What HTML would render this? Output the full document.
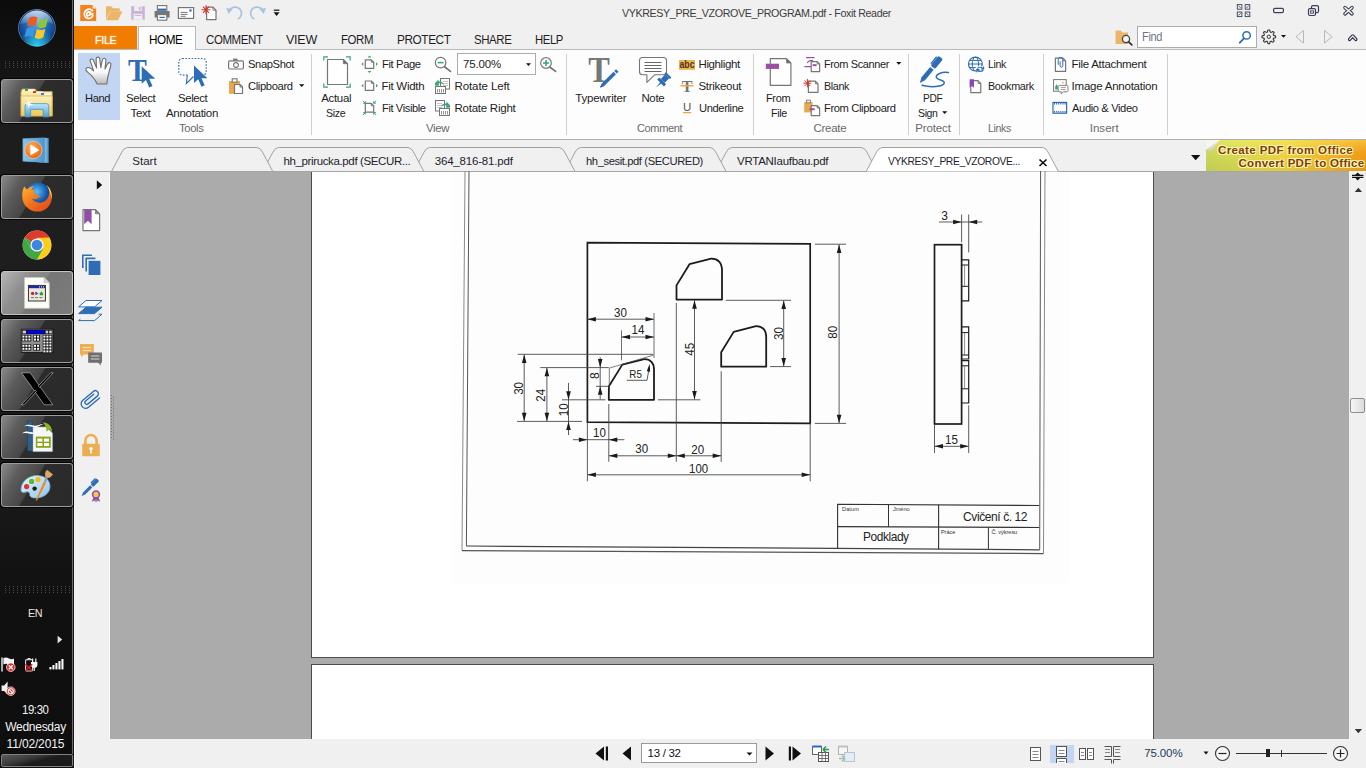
<!DOCTYPE html>
<html lang="en"><head><meta charset="utf-8"><title>VYKRESY_PRE_VZOROVE_PROGRAM.pdf - Foxit Reader</title>
<style>
html,body{margin:0;padding:0;}
body{width:1366px;height:768px;overflow:hidden;background:#f0f0f0;position:relative;font-family:"Liberation Sans",sans-serif;}
.b{position:absolute;display:block;}
.t{position:absolute;white-space:pre;font-family:"Liberation Sans",sans-serif;}
</style></head>
<body>
<div class="b" style="left:74px;top:0px;width:1292px;height:768px;background:#f0f0f0;"></div>
<div class="b" style="left:74px;top:49px;width:1292px;height:91px;background:#fdfdfd;border-top:1px solid #b9b9b9;border-bottom:1px solid #b0b0b0;box-sizing:border-box;"></div>
<div class="b" style="left:74px;top:26px;width:63px;height:23px;background:#f07c00;"></div>
<span class="t" style="left:94.80px;top:33.00px;font-size:11.5px;line-height:15px;letter-spacing:-0.403px;color:#ffffff;transform:scaleX(0.9481);transform-origin:0 0;text-shadow:0 0 2px #ffd9a8;">FILE</span>
<div class="b" style="left:138px;top:26px;width:58px;height:24px;background:#fdfdfd;border:1px solid #b9b9b9;border-bottom:none;box-sizing:border-box;"></div>
<span class="t" style="left:149.00px;top:32.00px;font-size:12.5px;line-height:16px;letter-spacing:-0.438px;color:#000;transform:scaleX(0.9370);transform-origin:0 0;">HOME</span>
<span class="t" style="left:206.00px;top:32.00px;font-size:12.5px;line-height:16px;letter-spacing:-0.438px;color:#1e1e1e;transform:scaleX(0.9185);transform-origin:0 0;">COMMENT</span>
<span class="t" style="left:286.00px;top:32.00px;font-size:12.5px;line-height:16px;letter-spacing:-0.237px;color:#1e1e1e;">VIEW</span>
<span class="t" style="left:341.00px;top:32.00px;font-size:12.5px;line-height:16px;letter-spacing:-0.438px;color:#1e1e1e;transform:scaleX(0.9130);transform-origin:0 0;">FORM</span>
<span class="t" style="left:396.50px;top:32.00px;font-size:12.5px;line-height:16px;letter-spacing:-0.438px;color:#1e1e1e;transform:scaleX(0.9442);transform-origin:0 0;">PROTECT</span>
<span class="t" style="left:473.50px;top:32.00px;font-size:12.5px;line-height:16px;letter-spacing:-0.438px;color:#1e1e1e;transform:scaleX(0.9173);transform-origin:0 0;">SHARE</span>
<span class="t" style="left:534.50px;top:32.00px;font-size:12.5px;line-height:16px;letter-spacing:-0.438px;color:#1e1e1e;transform:scaleX(0.9060);transform-origin:0 0;">HELP</span>
<span class="t" style="left:622.00px;top:6.00px;font-size:11.5px;line-height:15px;letter-spacing:-0.403px;color:#3c3c3c;transform:scaleX(0.9291);transform-origin:0 0;">VYKRESY_PRE_VZOROVE_PROGRAM.pdf - Foxit Reader</span>
<div class="b" style="left:1137px;top:26px;width:120px;height:22px;background:#fff;border:1px solid #ababab;box-sizing:border-box;"></div>
<span class="t" style="left:1141.50px;top:29.00px;font-size:12px;line-height:16px;letter-spacing:-0.420px;color:#6e7686;transform:scaleX(0.9232);transform-origin:0 0;">Find</span>
<div class="b" style="left:78px;top:53px;width:42px;height:67px;background:#c2d5f2;"></div>
<svg class="b" style="left:0px;top:0px;" width="1366" height="140" viewBox="0 0 1366 140"><defs><linearGradient id="hg" x1="0" x2="0" y1="0" y2="1"><stop offset="0" stop-color="#ffffff"/><stop offset="0.55" stop-color="#fbfbfb"/><stop offset="1" stop-color="#b9b9b9"/></linearGradient></defs><path d="M97.2,84 C95.5,80.5 92,75.5 88.2,72.6 C85.6,70.6 85.2,68.6 86.8,67.8 C88.6,66.9 91.2,68.2 93.6,71 C92.6,67.5 91,63.5 90.2,61 C89.6,59 92.4,58.2 93.4,60.2 C94.4,62.4 95.6,65.6 96.6,68 C96.4,65 96,60.8 96.2,58.6 C96.4,56.6 99.4,56.6 99.7,58.6 C100,61 100.4,65 100.9,67.6 C101.3,65 101.9,61.2 102.6,59.4 C103.3,57.6 106,58 105.9,60 C105.8,62.6 105.2,66.4 105,69 C105.8,67.2 106.9,64.8 107.9,63.4 C109,61.9 111.3,62.8 110.9,64.8 C110,69 108.6,73.2 107.9,76.6 C107.4,79.4 107.2,81.6 106.8,84 Z" fill="url(#hg)" stroke="#6e6e6e" stroke-width="1.1" stroke-linejoin="round"/><text x="137.4" y="81.2" font-family="Liberation Serif,serif" font-size="32.4" font-weight="bold" fill="#2e6db4" text-anchor="middle" textLength="18.8" lengthAdjust="spacingAndGlyphs">T</text><path d="M141.70,66.20 L141.70,83.86 L145.95,79.93 L149.22,87.56 L152.49,86.04 L149.22,78.84 L155.22,78.84 Z" fill="#2e6db4"/><path d="M182.3,58.5 h20.4 a3.5,3.5 0 0 1 3.5,3.5 v9.6 a3.5,3.5 0 0 1 -3.5,3.5 h-8 M187.5,75.1 h-5.2 a3.5,3.5 0 0 1 -3.5,-3.5 v-9.6 a3.5,3.5 0 0 1 3.5,-3.5" fill="none" stroke="#2e6db4" stroke-width="1.2" stroke-dasharray="1.6 1.5"/><path d="M187.3,75.3 L186.4,83.5 L193.5,76.5" fill="none" stroke="#2e6db4" stroke-width="1.1"/><path d="M194.00,65.60 L194.00,83.10 L198.21,79.21 L201.45,86.77 L204.69,85.26 L201.45,78.13 L207.39,78.13 Z" fill="#2e6db4"/><rect x="228.6" y="60.8" width="14.8" height="8.2" rx="1.2" fill="#fff" stroke="#767676" stroke-width="1.2"/><rect x="233" y="58.6" width="4.5" height="2" fill="#767676"/><circle cx="236" cy="65" r="2.4" fill="none" stroke="#767676" stroke-width="1.1"/><rect x="229" y="81" width="11" height="12.8" fill="#e9a94d"/><rect x="232.2" y="78.8" width="4.8" height="3.4" fill="#fff" stroke="#767676" stroke-width="1.1"/><path d="M234.5,84.5 h5.5 l2.5,2.5 v6.5 h-8 z" fill="#fff" stroke="#767676" stroke-width="1.2" stroke-linejoin="round"/><path d="M240.0,84.5 v2.5 h2.5" fill="none" stroke="#767676" stroke-width="0.96"/><path d="M299,84.3 h5.4 l-2.7,2.8 z" fill="#111"/><path d="M311.5,54 V135" stroke="#d0d0d0" stroke-width="1"/><path d="M566.5,54 V135" stroke="#d0d0d0" stroke-width="1"/><path d="M753.5,54 V135" stroke="#d0d0d0" stroke-width="1"/><path d="M908.5,54 V135" stroke="#d0d0d0" stroke-width="1"/><path d="M959.5,54 V135" stroke="#d0d0d0" stroke-width="1"/><path d="M1043.5,54 V135" stroke="#d0d0d0" stroke-width="1"/><path d="M1167.5,54 V135" stroke="#d0d0d0" stroke-width="1"/><path d="M323.8,60.5 v-3.6 h4.2 M346,56.9 h4.2 v3.6 M350.2,83.5 v3.7 h-4.2 M328,87.2 h-4.2 v-3.7" fill="none" stroke="#3aa373" stroke-width="1.2"/><path d="M327.5,59.5 h15.8 l4.2,4.2 v20.8 h-20 z" fill="#fff" stroke="#767676" stroke-width="1.2" stroke-linejoin="round"/><path d="M343.3,59.5 v4.2 h4.2 z" fill="#6f6f6f" stroke="#767676" stroke-width="0.72"/><path d="M365.3,59.8 h6.0 l2.4,2.4 v6.199999999999999 h-8.4 z" fill="#fff" stroke="#767676" stroke-width="1.2" stroke-linejoin="round"/><path d="M371.3,59.8 v2.4 h2.4" fill="none" stroke="#767676" stroke-width="0.96"/><path d="M361.40000000000003,64.1 l1.9,-1.9 v3.8 z" fill="#3aa373"/><path d="M377.9,64.1 l-1.9,-1.9 v3.8 z" fill="#3aa373"/><path d="M369.5,55.5 l1.9,1.9 h-3.8 z" fill="#3aa373"/><path d="M369.5,72.9 l1.9,-1.9 h-3.8 z" fill="#3aa373"/><path d="M365.3,81 h6.0 l2.4,2.4 v7.0 h-8.4 z" fill="#fff" stroke="#767676" stroke-width="1.2" stroke-linejoin="round"/><path d="M371.3,81 v2.4 h2.4" fill="none" stroke="#767676" stroke-width="0.96"/><path d="M361.40000000000003,85.7 l1.9,-1.9 v3.8 z" fill="#3aa373"/><path d="M377.9,85.7 l-1.9,-1.9 v3.8 z" fill="#3aa373"/><path d="M365.3,103.4 h6.0 l2.4,2.4 v6.4 h-8.4 z" fill="#fff" stroke="#767676" stroke-width="1.2" stroke-linejoin="round"/><path d="M371.3,103.4 v2.4 h2.4" fill="none" stroke="#767676" stroke-width="0.96"/><path d="M362.8,100.8 l2.3,2.3 M365.3,101.2 v2.1 h-2.1" stroke="#3aa373" stroke-width="1" fill="none"/><path d="M376.2,100.8 l-2.3,2.3 M373.7,101.2 v2.1 h2.1" stroke="#3aa373" stroke-width="1" fill="none"/><path d="M362.8,115 l2.3,-2.3 M365.3,114.6 v-2.1 h-2.1" stroke="#3aa373" stroke-width="1" fill="none"/><path d="M376.2,115 l-2.3,-2.3 M373.7,114.6 v-2.1 h2.1" stroke="#3aa373" stroke-width="1" fill="none"/><circle cx="440.6" cy="62.6" r="5.3" fill="#fff" stroke="#767676" stroke-width="1.2"/><path d="M444.6,66.8 L450.4,71.4" stroke="#767676" stroke-width="1.8" stroke-linecap="round"/><path d="M437.6,62.6 h6" stroke="#3aa373" stroke-width="1.5"/><rect x="457.5" y="53.5" width="78" height="21" fill="#fff" stroke="#ababab"/><path d="M526,63.2 h5 l-2.5,2.7 z" fill="#111"/><circle cx="546" cy="63" r="5.3" fill="#fff" stroke="#767676" stroke-width="1.2"/><path d="M550,67.2 L555.6,71.4" stroke="#767676" stroke-width="1.8" stroke-linecap="round"/><path d="M543,63 h6 M546,60 v6" stroke="#3aa373" stroke-width="1.5"/><rect x="440.5" y="78.5" width="9" height="10.5" fill="#fff" stroke="#767676" stroke-width="1"/><path d="M443,81.5 h5 M443,83.5 h5 M443,85.5 h5" stroke="#aaa" stroke-width="0.7"/><rect x="435.5" y="86.5" width="10" height="7" fill="#fff" stroke="#767676" stroke-width="1"/><path d="M437.5,89 v3.5 M439.5,89 v3.5 M441.5,89 v3.5 M443.5,89 v3.5" stroke="#767676" stroke-width="0.8"/><path d="M435,83.2 l3.6,-3.6 v2 c3,-0.3 5,0.8 5.4,3.6 c-1.2,-1.6 -3,-2 -5.4,-1.8 v2.6 z" fill="#3aa373"/><rect x="435" y="83" width="3.4" height="2.6" fill="#3aa373"/><rect x="435.5" y="100.5" width="9" height="10.5" fill="#fff" stroke="#767676" stroke-width="1"/><path d="M437,103.5 h5 M437,105.5 h5 M437,107.5 h5" stroke="#aaa" stroke-width="0.7"/><rect x="439.5" y="108.5" width="10" height="7" fill="#fff" stroke="#767676" stroke-width="1"/><path d="M441.5,111 v3.5 M443.5,111 v3.5 M445.5,111 v3.5 M447.5,111 v3.5" stroke="#767676" stroke-width="0.8"/><path d="M450,105.2 l-3.6,-3.6 v2 c-3,-0.3 -5,0.8 -5.4,3.6 c1.2,-1.6 3,-2 5.4,-1.8 v2.6 z" fill="#3aa373"/><rect x="446.6" y="105" width="3.4" height="2.6" fill="#3aa373"/><text x="599" y="82" font-family="Liberation Serif,serif" font-size="36.4" font-weight="bold" fill="#767676" text-anchor="middle" textLength="21.6" lengthAdjust="spacingAndGlyphs">T</text><g transform="translate(600.2,87.6) rotate(-45)"><path d="M0,0 l3.6,-1.7 h17 v3.4 h-17 z" fill="#2e6db4"/><rect x="21.6" y="-1.7" width="2.6" height="3.4" fill="#2e6db4"/><path d="M0,0 l2,-0.9 v1.8 z" fill="#1c3f6e"/></g><path d="M642.5,57.5 h21 a3,3 0 0 1 3,3 v11.2 a3,3 0 0 1 -3,3 h-8.6 l-8,7.6 v-7.6 h-4.4 a3,3 0 0 1 -3,-3 v-11.2 a3,3 0 0 1 3,-3 z" fill="#fff" stroke="#767676" stroke-width="1.1" stroke-linejoin="round"/><path d="M644.5,62.5 h17 M644.5,65.5 h17 M644.5,68.5 h17 M644.5,71.5 h17" stroke="#555" stroke-width="0.9"/><g transform="translate(656,87.6) rotate(-45)"><path d="M0,0 L7,-0.9 V0.9 Z" fill="#2e6db4"/><rect x="6.5" y="-4.8" width="3" height="9.6" fill="#2e6db4"/><rect x="9.5" y="-2.8" width="6.5" height="5.6" fill="#2e6db4"/><rect x="16" y="-3.8" width="2" height="7.6" fill="#2e6db4"/></g><rect x="679" y="60" width="16" height="9.8" fill="#f0b24f"/><text x="687" y="68" font-family="Liberation Sans,sans-serif" font-weight="bold" font-size="10.5" fill="#4a3a20" text-anchor="middle" textLength="15" lengthAdjust="spacingAndGlyphs">abc</text><text x="687" y="91.6" font-family="Liberation Serif,serif" font-weight="bold" font-size="16" fill="#757575" text-anchor="middle">T</text><path d="M680.6,85.7 h12.8" stroke="#eda53c" stroke-width="1.5"/><text x="687.1" y="110.6" font-family="Liberation Sans,sans-serif" font-size="11.5" fill="#555" text-anchor="middle">U</text><path d="M683,112.6 h8.2" stroke="#eda53c" stroke-width="1.3"/><path d="M770.3,58.6 h16.200000000000003 l4.4,4.4 v22.4 h-20.6 z" fill="#fff" stroke="#767676" stroke-width="1.2" stroke-linejoin="round"/><path d="M786.5,58.6 v4.4 h4.4 z" fill="#6f6f6f" stroke="#767676" stroke-width="0.72"/><rect x="765.8" y="63.7" width="13.2" height="5.2" fill="#9b4fa5"/><path d="M811.2,61.6 h6.0 l2.4,2.4 v7.6 h-8.4 z" fill="#fff" stroke="#767676" stroke-width="1.2" stroke-linejoin="round"/><path d="M817.2,61.6 v2.4 h2.4" fill="none" stroke="#767676" stroke-width="0.96"/><path d="M806,57.6 h8.6" stroke="#9b4fa5" stroke-width="1.2"/><path d="M804.4,66.6 h6.8 M807,62.8 l3,-2.2 h3" stroke="#9b4fa5" stroke-width="1.1" fill="none"/><rect x="812.6" y="64.2" width="4" height="2" fill="#9b4fa5"/><path d="M896.2,62 h5.2 l-2.6,2.7 z" fill="#111"/><path d="M808.4,81.2 h7.0 l2.6,2.6 v8.6 h-9.6 z" fill="#fff" stroke="#767676" stroke-width="1.2" stroke-linejoin="round"/><path d="M815.4,81.2 v2.6 h2.6" fill="none" stroke="#767676" stroke-width="0.96"/><path d="M807.4,79 v8.4 M803.4,83.2 h8 M804.6,80.4 l5.6,5.6 M810.2,80.4 l-5.6,5.6" stroke="#d0372a" stroke-width="1" /><rect x="804.2" y="102" width="8.4" height="10.4" fill="#e9a94d"/><rect x="806.6" y="100.2" width="3.8" height="2.6" fill="#fff" stroke="#767676" stroke-width="0.9"/><path d="M811.2,105.6 h6.0 l2.4,2.4 v7.6 h-8.4 z" fill="#fff" stroke="#767676" stroke-width="1.2" stroke-linejoin="round"/><path d="M817.2,105.6 v2.4 h2.4" fill="none" stroke="#767676" stroke-width="0.96"/><rect x="809.6" y="108.2" width="5" height="2" fill="#9b4fa5"/><g transform="translate(919.8,83) rotate(-50.5)"><path d="M0,0 L5.5,-2.3 H19 V2.3 H5.5 Z" fill="#2e6db4"/><rect x="20.4" y="-2.9" width="12.6" height="5.8" rx="1.6" fill="#2e6db4"/><rect x="22" y="-4.4" width="9" height="1.4" fill="#2e6db4"/></g><path d="M948.4,72.6 C942,71.6 935.4,74.2 936.4,77.6 C937.4,80.6 945,79.6 944.2,83.2 C943.4,87 930,87.6 922,85.2" fill="none" stroke="#2e6db4" stroke-width="1.5" stroke-linecap="round"/><path d="M942.1,111.2 h5.2 l-2.6,2.7 z" fill="#111"/><circle cx="975.4" cy="64" r="6.9" fill="#fff" stroke="#2e6db4" stroke-width="1.2"/><ellipse cx="975.4" cy="64" rx="3.1" ry="6.9" fill="none" stroke="#2e6db4" stroke-width="1"/><path d="M968.5,64 h13.8 M969.6,60.4 h11.6 M969.6,67.6 h11.6" stroke="#2e6db4" stroke-width="1"/><rect x="975.8" y="66.4" width="8.6" height="6" fill="#fff"/><path d="M977,68.6 c2,-1.8 4.6,-1.8 6.2,0 M983.6,66.4 v2.6 h-2.6 M983.4,70 c-2,1.8 -4.6,1.8 -6.2,0 M976.8,72.2 v-2.6 h2.6" fill="none" stroke="#2e6db4" stroke-width="1.2"/><path d="M970.8,80.6 h7.2 l2.8,2.8 v9.2 h-10 z" fill="#fff" stroke="#767676" stroke-width="1.2" stroke-linejoin="round"/><path d="M978.0,80.6 v2.8 h2.8" fill="none" stroke="#767676" stroke-width="0.96"/><path d="M969.6,79.2 h4.4 v8.6 l-2.2,-1.8 l-2.2,1.8 z" fill="#8e44ad"/><path d="M1055.4,58.2 h7.6 l2.6,2.6 v10.6 h-10.2 z" fill="#fff" stroke="#767676" stroke-width="1.2" stroke-linejoin="round"/><path d="M1063.0000000000002,58.2 v2.6 h2.6" fill="none" stroke="#767676" stroke-width="0.96"/><path d="M1058.2,64.8 v-5.2 a2.3,2.3 0 0 1 4.6,0 v6.2 a1.35,1.35 0 0 1 -2.7,0 v-4.6" fill="none" stroke="#2e6db4" stroke-width="1"/><rect x="1053.6" y="79.6" width="12.6" height="11.6" fill="#fff" stroke="#767676" stroke-width="1"/><path d="M1055.2,89.6 v-3 l1.4,-2.4 l1.2,2 v3.4 z" fill="#3aa373"/><circle cx="1063" cy="82.6" r="0.9" fill="#e9a94d"/><path d="M1059.6,85.4 h7 a1.4,1.4 0 0 1 1.4,1.4 v3.6 a1.4,1.4 0 0 1 -1.4,1.4 h-3.2 l-2.2,2 v-2 h-1.6 a1.4,1.4 0 0 1 -1.4,-1.4 v-3.6 a1.4,1.4 0 0 1 1.4,-1.4 z" fill="#fff" stroke="#767676" stroke-width="0.9"/><path d="M1060.6,87.6 h5.2 M1060.6,89.6 h5.2" stroke="#767676" stroke-width="0.7"/><rect x="1053" y="102.4" width="13.6" height="10.8" fill="#fff" stroke="#2e6db4" stroke-width="1.2"/><path d="M1054,103.8 h12" stroke="#2e6db4" stroke-width="1.6" stroke-dasharray="1.1 1"/><path d="M1054,111.8 h12" stroke="#2e6db4" stroke-width="1.6" stroke-dasharray="1.1 1"/></svg>
<span class="t" style="left:85.40px;top:91.00px;font-size:11.5px;line-height:15px;letter-spacing:-0.403px;color:#1e1e1e;transform:scaleX(0.9697);transform-origin:0 0;">Hand</span>
<span class="t" style="left:125.50px;top:91.00px;font-size:11.5px;line-height:15px;letter-spacing:-0.403px;color:#1e1e1e;transform:scaleX(0.9916);transform-origin:0 0;">Select</span>
<span class="t" style="left:130.50px;top:106.00px;font-size:11.5px;line-height:15px;letter-spacing:-0.323px;color:#1e1e1e;">Text</span>
<span class="t" style="left:177.50px;top:91.00px;font-size:11.5px;line-height:15px;letter-spacing:-0.403px;color:#1e1e1e;transform:scaleX(0.9916);transform-origin:0 0;">Select</span>
<span class="t" style="left:165.90px;top:106.00px;font-size:11.5px;line-height:15px;letter-spacing:-0.279px;color:#1e1e1e;">Annotation</span>
<span class="t" style="left:247.60px;top:57.00px;font-size:11.5px;line-height:15px;letter-spacing:-0.403px;color:#1e1e1e;transform:scaleX(0.9747);transform-origin:0 0;">SnapShot</span>
<span class="t" style="left:247.60px;top:79.00px;font-size:11.5px;line-height:15px;letter-spacing:-0.403px;color:#1e1e1e;transform:scaleX(0.9802);transform-origin:0 0;">Clipboard</span>
<span class="t" style="left:321.20px;top:91.00px;font-size:11.5px;line-height:15px;letter-spacing:-0.327px;color:#1e1e1e;">Actual</span>
<span class="t" style="left:326.30px;top:106.00px;font-size:11.5px;line-height:15px;letter-spacing:-0.403px;color:#1e1e1e;transform:scaleX(0.9248);transform-origin:0 0;">Size</span>
<span class="t" style="left:381.50px;top:57.00px;font-size:11.5px;line-height:15px;letter-spacing:-0.403px;color:#1e1e1e;transform:scaleX(0.9771);transform-origin:0 0;">Fit Page</span>
<span class="t" style="left:381.50px;top:79.00px;font-size:11.5px;line-height:15px;letter-spacing:-0.285px;color:#1e1e1e;">Fit Width</span>
<span class="t" style="left:381.50px;top:101.00px;font-size:11.5px;line-height:15px;letter-spacing:-0.403px;color:#1e1e1e;transform:scaleX(0.9643);transform-origin:0 0;">Fit Visible</span>
<span class="t" style="left:462.90px;top:57.00px;font-size:11.5px;line-height:15px;letter-spacing:-0.151px;color:#1e1e1e;">75.00%</span>
<span class="t" style="left:454.50px;top:79.00px;font-size:11.5px;line-height:15px;letter-spacing:-0.096px;color:#1e1e1e;">Rotate Left</span>
<span class="t" style="left:454.50px;top:101.00px;font-size:11.5px;line-height:15px;letter-spacing:-0.244px;color:#1e1e1e;">Rotate Right</span>
<span class="t" style="left:575.20px;top:91.00px;font-size:11.5px;line-height:15px;letter-spacing:-0.174px;color:#1e1e1e;">Typewriter</span>
<span class="t" style="left:641.40px;top:91.00px;font-size:11.5px;line-height:15px;letter-spacing:-0.348px;color:#1e1e1e;">Note</span>
<span class="t" style="left:698.50px;top:57.00px;font-size:11.5px;line-height:15px;letter-spacing:-0.383px;color:#1e1e1e;">Highlight</span>
<span class="t" style="left:698.50px;top:79.00px;font-size:11.5px;line-height:15px;letter-spacing:-0.298px;color:#1e1e1e;">Strikeout</span>
<span class="t" style="left:698.50px;top:101.00px;font-size:11.5px;line-height:15px;letter-spacing:-0.403px;color:#1e1e1e;transform:scaleX(0.9714);transform-origin:0 0;">Underline</span>
<span class="t" style="left:766.20px;top:91.00px;font-size:11.5px;line-height:15px;letter-spacing:-0.403px;color:#1e1e1e;transform:scaleX(0.9595);transform-origin:0 0;">From</span>
<span class="t" style="left:770.60px;top:106.00px;font-size:11.5px;line-height:15px;letter-spacing:-0.403px;color:#1e1e1e;transform:scaleX(0.9337);transform-origin:0 0;">File</span>
<span class="t" style="left:823.80px;top:57.00px;font-size:11.5px;line-height:15px;letter-spacing:-0.403px;color:#1e1e1e;transform:scaleX(0.9555);transform-origin:0 0;">From Scanner</span>
<span class="t" style="left:823.80px;top:79.00px;font-size:11.5px;line-height:15px;letter-spacing:-0.403px;color:#1e1e1e;transform:scaleX(0.9344);transform-origin:0 0;">Blank</span>
<span class="t" style="left:823.80px;top:101.00px;font-size:11.5px;line-height:15px;letter-spacing:-0.403px;color:#1e1e1e;transform:scaleX(0.9740);transform-origin:0 0;">From Clipboard</span>
<span class="t" style="left:923.10px;top:91.00px;font-size:11.5px;line-height:15px;letter-spacing:-0.403px;color:#1e1e1e;transform:scaleX(0.8856);transform-origin:0 0;">PDF</span>
<span class="t" style="left:918.40px;top:106.00px;font-size:11.5px;line-height:15px;letter-spacing:-0.403px;color:#1e1e1e;transform:scaleX(0.9155);transform-origin:0 0;">Sign</span>
<span class="t" style="left:987.80px;top:57.00px;font-size:11.5px;line-height:15px;letter-spacing:-0.403px;color:#1e1e1e;transform:scaleX(0.9186);transform-origin:0 0;">Link</span>
<span class="t" style="left:987.80px;top:79.00px;font-size:11.5px;line-height:15px;letter-spacing:-0.403px;color:#1e1e1e;transform:scaleX(0.9413);transform-origin:0 0;">Bookmark</span>
<span class="t" style="left:1071.60px;top:57.00px;font-size:11.5px;line-height:15px;letter-spacing:-0.291px;color:#1e1e1e;">File Attachment</span>
<span class="t" style="left:1071.60px;top:79.00px;font-size:11.5px;line-height:15px;letter-spacing:-0.232px;color:#1e1e1e;">Image Annotation</span>
<span class="t" style="left:1071.60px;top:101.00px;font-size:11.5px;line-height:15px;letter-spacing:-0.403px;color:#1e1e1e;transform:scaleX(0.9726);transform-origin:0 0;">Audio &amp; Video</span>
<span class="t" style="left:179.00px;top:121.00px;font-size:11.5px;line-height:15px;letter-spacing:-0.403px;color:#6a6a6a;transform:scaleX(0.9865);transform-origin:0 0;">Tools</span>
<span class="t" style="left:426.00px;top:121.00px;font-size:11.5px;line-height:15px;letter-spacing:-0.403px;color:#6a6a6a;transform:scaleX(0.9953);transform-origin:0 0;">View</span>
<span class="t" style="left:636.70px;top:121.00px;font-size:11.5px;line-height:15px;letter-spacing:-0.403px;color:#6a6a6a;transform:scaleX(0.9590);transform-origin:0 0;">Comment</span>
<span class="t" style="left:813.60px;top:121.00px;font-size:11.5px;line-height:15px;letter-spacing:-0.303px;color:#6a6a6a;">Create</span>
<span class="t" style="left:915.20px;top:121.00px;font-size:11.5px;line-height:15px;letter-spacing:-0.133px;color:#6a6a6a;">Protect</span>
<span class="t" style="left:988.30px;top:121.00px;font-size:11.5px;line-height:15px;letter-spacing:-0.403px;color:#6a6a6a;transform:scaleX(0.9221);transform-origin:0 0;">Links</span>
<span class="t" style="left:1089.70px;top:121.00px;font-size:11.5px;line-height:15px;letter-spacing:0.040px;color:#6a6a6a;">Insert</span>
<div class="b" style="left:74px;top:140px;width:1292px;height:31px;background:#f0f0f0;"></div>
<svg class="b" style="left:0px;top:0px;" width="1366" height="180" viewBox="0 0 1366 180"><path d="M715.9,171.5 L726.30,152.0 Q728.06,148.1 731.6999999999999,147.5 L861.4000000000001,147.5 Q865.04,148.1 866.80,152.0 L877.2,171.5" stroke="#a2a2a2" stroke-width="1" fill="#f0f0f0"/><path d="M564.8,171.5 L575.20,152.0 Q576.96,148.1 580.5999999999999,147.5 L710.3,147.5 Q713.94,148.1 715.70,152.0 L726.0999999999999,171.5" stroke="#a2a2a2" stroke-width="1" fill="#f0f0f0"/><path d="M413.7,171.5 L424.10,152.0 Q425.86,148.1 429.5,147.5 L559.2,147.5 Q562.84,148.1 564.60,152.0 L575.0,171.5" stroke="#a2a2a2" stroke-width="1" fill="#f0f0f0"/><path d="M262.6,171.5 L273.00,152.0 Q274.76,148.1 278.40000000000003,147.5 L408.1,147.5 Q411.74,148.1 413.50,152.0 L423.90000000000003,171.5" stroke="#a2a2a2" stroke-width="1" fill="#f0f0f0"/><path d="M111.5,171.5 L121.90,152.0 Q123.66,148.1 127.3,147.5 L257.0,147.5 Q260.64,148.1 262.40,152.0 L272.8,171.5" stroke="#a2a2a2" stroke-width="1" fill="#f0f0f0"/><path d="M74,171.5 H1366" stroke="#a6a6a6" stroke-width="1" fill="none"/><path d="M866.2,171.5 L876.60,152.0 Q878.36,148.1 882,147.5 L1042.6,147.5 Q1046.24,148.1 1048.00,152.0 L1058.4,171.5" stroke="#a2a2a2" stroke-width="1" fill="#ffffff"/><path d="M867.5,171.5 H1057" stroke="#c8c8c8" stroke-width="1" fill="none"/><path d="M1039.5,159.500 L1046.5,166 M1046.5,159.500 L1039.5,166" stroke="#111" stroke-width="1.700" fill="none"/><path d="M1191,155 h9.400 l-4.700,5.200 z" fill="#111"/></svg>
<span class="t" style="left:132.30px;top:154.00px;font-size:11.5px;line-height:15px;letter-spacing:0.003px;color:#1e1e2e;">Start</span>
<span class="t" style="left:283.50px;top:154.00px;font-size:11.5px;line-height:15px;letter-spacing:-0.370px;color:#1e1e2e;">hh_prirucka.pdf (SECUR...</span>
<span class="t" style="left:434.70px;top:154.00px;font-size:11.5px;line-height:15px;letter-spacing:-0.177px;color:#1e1e2e;">364_816-81.pdf</span>
<span class="t" style="left:585.50px;top:154.00px;font-size:11.5px;line-height:15px;letter-spacing:-0.403px;color:#1e1e2e;transform:scaleX(0.9722);transform-origin:0 0;">hh_sesit.pdf (SECURED)</span>
<span class="t" style="left:737.00px;top:154.00px;font-size:11.5px;line-height:15px;letter-spacing:-0.267px;color:#1e1e2e;">VRTANIaufbau.pdf</span>
<span class="t" style="left:887.50px;top:154.00px;font-size:11.5px;line-height:15px;letter-spacing:-0.403px;color:#1e1e2e;transform:scaleX(0.8935);transform-origin:0 0;">VYKRESY_PRE_VZOROVE...</span>
<div class="b" style="left:1206px;top:140px;width:160px;height:31px;background:linear-gradient(180deg,rgba(255,255,120,0.35) 0%,rgba(255,255,120,0) 45%,rgba(120,120,40,0.10) 100%),linear-gradient(90deg,#c9d65a 0%,#dcda50 25%,#edd240 50%,#f1b52c 76%,#f09a18 100%);"></div>
<svg class="b" style="left:1206px;top:140px;" width="16" height="13" viewBox="0 0 16 13"><defs><linearGradient id="curl" x1="0.2" y1="0" x2="0.8" y2="1"><stop offset="0" stop-color="#ffffff"/><stop offset="1" stop-color="#b9b9a4"/></linearGradient></defs><path d="M0,0 H14.600 L0,9.600 Z" fill="#f6f6f0"/><path d="M14.600,0 L0.400,9.400 C3,10.400 5,11.200 6,12 C7.600,7.600 10.400,3 14.600,0 Z" fill="url(#curl)"/></svg>
<span class="t" style="left:1218.00px;top:143.00px;font-size:11.5px;line-height:15px;letter-spacing:0.385px;color:#7a3f08;font-weight:bold;text-shadow:0 0 1px #fff6c0,1px 1px 0 #fff3b0,-1px -1px 0 #fff3b0,1px -1px 0 #fff3b0,-1px 1px 0 #fff3b0;">Create PDF from Office</span>
<span class="t" style="left:1238.50px;top:156.00px;font-size:11.5px;line-height:15px;letter-spacing:0.310px;color:#7a3f08;font-weight:bold;text-shadow:0 0 1px #fff6c0,1px 1px 0 #fff3b0,-1px -1px 0 #fff3b0,1px -1px 0 #fff3b0,-1px 1px 0 #fff3b0;">Convert PDF to Office</span>
<div class="b" style="left:110px;top:172px;width:1239px;height:567px;background:#ababab;"></div>
<div class="b" style="left:74px;top:172px;width:36px;height:567px;background:#f0f0f0;border-right:1px solid #fafafa;box-sizing:border-box;"></div>
<div class="b" style="left:311px;top:172px;width:843px;height:486px;background:#fff;border:1px solid #4d4d4d;border-top:none;box-sizing:border-box;"></div>
<div class="b" style="left:452px;top:172px;width:617px;height:411px;background:#fdfdfd;"></div>
<div class="b" style="left:311px;top:664px;width:843px;height:80px;background:#fff;border:1px solid #4d4d4d;box-sizing:border-box;"></div>
<div class="b" style="left:1349px;top:171px;width:17px;height:568px;background:#f0f0f0;"></div>
<svg class="b" style="left:1349px;top:171px;" width="17" height="569" viewBox="0 0 17 569"><defs><linearGradient id="thg" x1="0" x2="1" y1="0" y2="0"><stop offset="0" stop-color="#f6f6f6"/><stop offset="0.5" stop-color="#e9e9e9"/><stop offset="1" stop-color="#d9d9d9"/></linearGradient></defs><path d="M3,4.400 H14.400 M3,6.400 H14.400" stroke="#111" stroke-width="1.100"/><path d="M8.700,1.400 l2.600,2.600 h-5.200 z M8.700,9.400 l2.600,-2.600 h-5.200 z" fill="#111"/><path d="M5.800,21 l3.600,-4.200 l3.600,4.200 z" fill="#333"/><path d="M5.800,558 l3.600,4.200 l3.600,-4.200 z" fill="#333"/><rect x="1.5" y="227.5" width="14" height="14" rx="1.5" fill="url(#thg)" stroke="#8f8f8f"/></svg>
<svg class="b" style="left:111px;top:395px;" width="4" height="45" viewBox="0 0 4 45"><rect x="0" y="0" width="1" height="1" fill="#707070"/><rect x="2" y="1.5" width="1" height="1" fill="#707070"/><rect x="0" y="3" width="1" height="1" fill="#707070"/><rect x="2" y="4.5" width="1" height="1" fill="#707070"/><rect x="0" y="6" width="1" height="1" fill="#707070"/><rect x="2" y="7.5" width="1" height="1" fill="#707070"/><rect x="0" y="9" width="1" height="1" fill="#707070"/><rect x="2" y="10.5" width="1" height="1" fill="#707070"/><rect x="0" y="12" width="1" height="1" fill="#707070"/><rect x="2" y="13.5" width="1" height="1" fill="#707070"/><rect x="0" y="15" width="1" height="1" fill="#707070"/><rect x="2" y="16.5" width="1" height="1" fill="#707070"/><rect x="0" y="18" width="1" height="1" fill="#707070"/><rect x="2" y="19.5" width="1" height="1" fill="#707070"/><rect x="0" y="21" width="1" height="1" fill="#707070"/><rect x="2" y="22.5" width="1" height="1" fill="#707070"/><rect x="0" y="24" width="1" height="1" fill="#707070"/><rect x="2" y="25.5" width="1" height="1" fill="#707070"/><rect x="0" y="27" width="1" height="1" fill="#707070"/><rect x="2" y="28.5" width="1" height="1" fill="#707070"/><rect x="0" y="30" width="1" height="1" fill="#707070"/><rect x="2" y="31.5" width="1" height="1" fill="#707070"/><rect x="0" y="33" width="1" height="1" fill="#707070"/><rect x="2" y="34.5" width="1" height="1" fill="#707070"/><rect x="0" y="36" width="1" height="1" fill="#707070"/><rect x="2" y="37.5" width="1" height="1" fill="#707070"/><rect x="0" y="39" width="1" height="1" fill="#707070"/><rect x="2" y="40.5" width="1" height="1" fill="#707070"/><rect x="0" y="42" width="1" height="1" fill="#707070"/><rect x="2" y="43.5" width="1" height="1" fill="#707070"/></svg>
<svg class="b" style="left:0px;top:0px;" width="1366" height="768" viewBox="0 0 1366 768"><path d="M465,171 L462,550.6" stroke="#8a8a8a" stroke-width="1" fill="none"/><path d="M469,171 L466.4,546" stroke="#555" stroke-width="1" fill="none"/><path d="M462,550.6 L1043.5,553.6" stroke="#555" stroke-width="1.2" fill="none"/><path d="M466.4,546 L1039.7,549.8" stroke="#444" stroke-width="1.2" fill="none"/><path d="M1045,171 L1043.5,553.6" stroke="#8a8a8a" stroke-width="1" fill="none"/><path d="M1040.6,171 L1039.7,549.8" stroke="#555" stroke-width="1" fill="none"/><path d="M587.4,242.6 L810.2,243.9 L810.2,423.3 L587.4,422.2 Z" fill="none" stroke="#1c1c1c" stroke-width="1.7"/><path d="M676.5,299.6 L722,299.6 L722,270.5 C722,262.5 718,258.6 711.2,258.7 L689.5,264.2 L676.5,285.4 Z" fill="none" stroke="#1c1c1c" stroke-width="1.8" stroke-linejoin="round"/><path d="M721.2,366.7 L766.2,366.7 L766.2,337.5 C766.2,330 762.5,326 756,326.1 L733.7,331.9 L721.2,352.3 Z" fill="none" stroke="#1c1c1c" stroke-width="1.8" stroke-linejoin="round"/><path d="M608.8,399.8 L654,399.8 L654,369.5 C654,363 650.5,359 644.3,359.1 L622.3,364.6 L608.9,386.3 Z" fill="none" stroke="#1c1c1c" stroke-width="1.8" stroke-linejoin="round"/><path d="M609.3,368.1 L653.6,355.1" stroke="#4a4a4a" stroke-width="0.7" fill="none"/><path d="M609.3,368.1 L609.3,386" stroke="#4a4a4a" stroke-width="0.7" fill="none"/><path d="M587.4,319.2 L654,319.2" stroke="#4a4a4a" stroke-width="0.9" fill="none"/><path d="M587.40,319.20 L595.90,316.90 L595.90,321.50 Z" fill="#1a1a1a"/><path d="M654.00,319.20 L645.50,321.50 L645.50,316.90 Z" fill="#1a1a1a"/><path d="M654,313 L654,358" stroke="#4a4a4a" stroke-width="0.8" fill="none"/><text x="620.4" y="313.4" font-family="Liberation Sans,sans-serif" font-size="12.4" fill="#222" text-anchor="middle" dominant-baseline="central" textLength="12.9" lengthAdjust="spacingAndGlyphs">30</text><path d="M621.5,337 L654,337" stroke="#4a4a4a" stroke-width="0.9" fill="none"/><path d="M621.50,337.00 L630.00,334.70 L630.00,339.30 Z" fill="#1a1a1a"/><path d="M654.00,337.00 L645.50,339.30 L645.50,334.70 Z" fill="#1a1a1a"/><path d="M621.5,330.3 L621.5,360.3" stroke="#4a4a4a" stroke-width="0.8" fill="none"/><text x="638" y="330.2" font-family="Liberation Sans,sans-serif" font-size="12.4" fill="#222" text-anchor="middle" dominant-baseline="central" textLength="12.9" lengthAdjust="spacingAndGlyphs">14</text><path d="M694.5,300.2 L694.5,399.6" stroke="#4a4a4a" stroke-width="0.9" fill="none"/><path d="M694.50,300.20 L696.80,308.70 L692.20,308.70 Z" fill="#1a1a1a"/><path d="M694.50,399.60 L692.20,391.10 L696.80,391.10 Z" fill="#1a1a1a"/><path d="M658,399.8 L700.4,399.8" stroke="#4a4a4a" stroke-width="0.9" fill="none"/><text x="689.8" y="349.3" font-family="Liberation Sans,sans-serif" font-size="12.4" fill="#222" text-anchor="middle" dominant-baseline="central" textLength="12.9" lengthAdjust="spacingAndGlyphs" transform="rotate(-90 689.8 349.3)">45</text><path d="M783.7,300.6 L783.7,366.4" stroke="#4a4a4a" stroke-width="0.9" fill="none"/><path d="M783.70,300.60 L786.00,309.10 L781.40,309.10 Z" fill="#1a1a1a"/><path d="M783.70,366.40 L781.40,357.90 L786.00,357.90 Z" fill="#1a1a1a"/><path d="M725.9,300.3 L791,300.3" stroke="#4a4a4a" stroke-width="0.9" fill="none"/><path d="M770.1,366.6 L791,366.6" stroke="#4a4a4a" stroke-width="0.9" fill="none"/><text x="779.4" y="333.6" font-family="Liberation Sans,sans-serif" font-size="12.4" fill="#222" text-anchor="middle" dominant-baseline="central" textLength="12.9" lengthAdjust="spacingAndGlyphs" transform="rotate(-90 779.4 333.6)">30</text><path d="M839.1,244.5 L839.1,423.2" stroke="#4a4a4a" stroke-width="0.9" fill="none"/><path d="M839.10,244.50 L841.40,253.00 L836.80,253.00 Z" fill="#1a1a1a"/><path d="M839.10,423.20 L836.80,414.70 L841.40,414.70 Z" fill="#1a1a1a"/><path d="M814.9,244.2 L846.1,244.2" stroke="#4a4a4a" stroke-width="0.9" fill="none"/><path d="M814.9,423.4 L846.1,423.4" stroke="#4a4a4a" stroke-width="0.9" fill="none"/><text x="833.2" y="332.3" font-family="Liberation Sans,sans-serif" font-size="12.4" fill="#222" text-anchor="middle" dominant-baseline="central" textLength="12.9" lengthAdjust="spacingAndGlyphs" transform="rotate(-90 833.2 332.3)">80</text><path d="M524.2,354.5 L524.2,421.2" stroke="#4a4a4a" stroke-width="0.9" fill="none"/><path d="M524.20,354.50 L526.50,363.00 L521.90,363.00 Z" fill="#1a1a1a"/><path d="M524.20,421.20 L521.90,412.70 L526.50,412.70 Z" fill="#1a1a1a"/><path d="M517.7,354.3 L653,354.3" stroke="#4a4a4a" stroke-width="0.9" fill="none"/><path d="M517,421.4 L582,421.4" stroke="#4a4a4a" stroke-width="0.9" fill="none"/><text x="519.3" y="388.4" font-family="Liberation Sans,sans-serif" font-size="12.4" fill="#222" text-anchor="middle" dominant-baseline="central" textLength="12.9" lengthAdjust="spacingAndGlyphs" transform="rotate(-90 519.3 388.4)">30</text><path d="M546.9,367.8 L546.9,421.2" stroke="#4a4a4a" stroke-width="0.9" fill="none"/><path d="M546.90,367.80 L549.20,376.30 L544.60,376.30 Z" fill="#1a1a1a"/><path d="M546.90,421.20 L544.60,412.70 L549.20,412.70 Z" fill="#1a1a1a"/><path d="M540.3,367.6 L608.8,367.6" stroke="#4a4a4a" stroke-width="0.9" fill="none"/><text x="541.4" y="395.2" font-family="Liberation Sans,sans-serif" font-size="12.4" fill="#222" text-anchor="middle" dominant-baseline="central" textLength="12.9" lengthAdjust="spacingAndGlyphs" transform="rotate(-90 541.4 395.2)">24</text><path d="M568.5,382.9 L568.5,435" stroke="#4a4a4a" stroke-width="0.9" fill="none"/><path d="M568.50,399.80 L566.20,391.30 L570.80,391.30 Z" fill="#1a1a1a"/><path d="M568.50,421.40 L570.80,429.90 L566.20,429.90 Z" fill="#1a1a1a"/><path d="M562,399.8 L605.4,399.8" stroke="#4a4a4a" stroke-width="0.9" fill="none"/><text x="564" y="409.7" font-family="Liberation Sans,sans-serif" font-size="12.4" fill="#222" text-anchor="middle" dominant-baseline="central" textLength="12.9" lengthAdjust="spacingAndGlyphs" transform="rotate(-90 564 409.7)">10</text><path d="M600.2,357.2 L600.2,399.3" stroke="#4a4a4a" stroke-width="0.9" fill="none"/><path d="M600.20,367.60 L597.90,359.10 L602.50,359.10 Z" fill="#1a1a1a"/><path d="M600.20,386.30 L602.50,394.80 L597.90,394.80 Z" fill="#1a1a1a"/><path d="M596,386.3 L608.8,386.3" stroke="#4a4a4a" stroke-width="0.9" fill="none"/><text x="595.2" y="375.6" font-family="Liberation Sans,sans-serif" font-size="12.4" fill="#222" text-anchor="middle" dominant-baseline="central" textLength="6.7" lengthAdjust="spacingAndGlyphs" transform="rotate(-90 595.2 375.6)">8</text><text x="635.6" y="374.4" font-family="Liberation Sans,sans-serif" font-size="10.8" fill="#222" text-anchor="middle" dominant-baseline="central" textLength="12.6" lengthAdjust="spacingAndGlyphs">R5</text><path d="M626.8,380.3 L647,380.3" stroke="#4a4a4a" stroke-width="0.9" fill="none"/><path d="M647,380.3 L649.5,366" stroke="#4a4a4a" stroke-width="0.9" fill="none"/><path d="M649.70,363.70 L650.13,371.87 L646.77,371.34 Z" fill="#1a1a1a"/><path d="M572.9,439.7 L624.4,439.7" stroke="#4a4a4a" stroke-width="0.9" fill="none"/><path d="M587.40,439.70 L578.90,442.00 L578.90,437.40 Z" fill="#1a1a1a"/><path d="M608.80,439.70 L617.30,437.40 L617.30,442.00 Z" fill="#1a1a1a"/><text x="599.5" y="433.4" font-family="Liberation Sans,sans-serif" font-size="12.4" fill="#222" text-anchor="middle" dominant-baseline="central" textLength="12.9" lengthAdjust="spacingAndGlyphs">10</text><path d="M608.8,455.8 L676.3,455.8" stroke="#4a4a4a" stroke-width="0.9" fill="none"/><path d="M608.80,455.80 L617.30,453.50 L617.30,458.10 Z" fill="#1a1a1a"/><path d="M676.30,455.80 L667.80,458.10 L667.80,453.50 Z" fill="#1a1a1a"/><path d="M676.3,455.8 L721.2,455.8" stroke="#4a4a4a" stroke-width="0.9" fill="none"/><path d="M676.30,455.80 L684.80,453.50 L684.80,458.10 Z" fill="#1a1a1a"/><path d="M721.20,455.80 L712.70,458.10 L712.70,453.50 Z" fill="#1a1a1a"/><text x="641.8" y="449.2" font-family="Liberation Sans,sans-serif" font-size="12.4" fill="#222" text-anchor="middle" dominant-baseline="central" textLength="12.9" lengthAdjust="spacingAndGlyphs">30</text><text x="697.8" y="450" font-family="Liberation Sans,sans-serif" font-size="12.4" fill="#222" text-anchor="middle" dominant-baseline="central" textLength="12.9" lengthAdjust="spacingAndGlyphs">20</text><path d="M587.4,474.8 L810.2,474.8" stroke="#4a4a4a" stroke-width="0.9" fill="none"/><path d="M587.40,474.80 L595.90,472.50 L595.90,477.10 Z" fill="#1a1a1a"/><path d="M810.20,474.80 L801.70,477.10 L801.70,472.50 Z" fill="#1a1a1a"/><text x="698.6" y="469" font-family="Liberation Sans,sans-serif" font-size="12.4" fill="#222" text-anchor="middle" dominant-baseline="central" textLength="19.1" lengthAdjust="spacingAndGlyphs">100</text><path d="M587.4,422 L587.4,481.3" stroke="#4a4a4a" stroke-width="0.9" fill="none"/><path d="M608.8,404 L608.8,461.8" stroke="#4a4a4a" stroke-width="0.9" fill="none"/><path d="M676.3,303 L676.3,461.8" stroke="#4a4a4a" stroke-width="0.9" fill="none"/><path d="M721.2,371.2 L721.2,461.8" stroke="#4a4a4a" stroke-width="0.9" fill="none"/><path d="M810.2,423 L810.2,481.3" stroke="#4a4a4a" stroke-width="0.9" fill="none"/><rect x="934.5" y="244.7" width="27.1" height="179.3" fill="none" stroke="#1c1c1c" stroke-width="1.7"/><path d="M961.6,259.9 H968.7 V300.8 H961.6" fill="none" stroke="#1c1c1c" stroke-width="1.2"/><path d="M961.6,265 L968.7,265" stroke="#1c1c1c" stroke-width="1" fill="none"/><path d="M961.6,286.3 L968.7,286.3" stroke="#1c1c1c" stroke-width="1" fill="none"/><path d="M964.6,265 L964.6,286.3" stroke="#4a4a4a" stroke-width="0.6" fill="none"/><path d="M961.6,326.9 H968.7 V359 H961.6" fill="none" stroke="#1c1c1c" stroke-width="1.2"/><path d="M961.6,332.6 L968.7,332.6" stroke="#1c1c1c" stroke-width="1" fill="none"/><path d="M961.6,355 L968.7,355" stroke="#1c1c1c" stroke-width="1" fill="none"/><path d="M964.6,332.6 L964.6,355" stroke="#4a4a4a" stroke-width="0.6" fill="none"/><path d="M961.6,360.7 H968.7 V403 H961.6" fill="none" stroke="#1c1c1c" stroke-width="1.2"/><path d="M961.6,365.8 L968.7,365.8" stroke="#1c1c1c" stroke-width="1" fill="none"/><path d="M961.6,388.8 L968.7,388.8" stroke="#1c1c1c" stroke-width="1" fill="none"/><path d="M964.6,365.8 L964.6,388.8" stroke="#4a4a4a" stroke-width="0.6" fill="none"/><path d="M938.9,222 L982.2,222" stroke="#4a4a4a" stroke-width="0.9" fill="none"/><path d="M961.60,222.00 L953.10,224.30 L953.10,219.70 Z" fill="#1a1a1a"/><path d="M968.70,222.00 L977.20,219.70 L977.20,224.30 Z" fill="#1a1a1a"/><path d="M961.6,214.5 L961.6,242.3" stroke="#4a4a4a" stroke-width="0.9" fill="none"/><path d="M968.7,214.5 L968.7,252.4" stroke="#4a4a4a" stroke-width="0.9" fill="none"/><text x="944.7" y="216.4" font-family="Liberation Sans,sans-serif" font-size="12.4" fill="#222" text-anchor="middle" dominant-baseline="central" textLength="6.7" lengthAdjust="spacingAndGlyphs">3</text><path d="M934.5,446.3 L968.7,446.3" stroke="#4a4a4a" stroke-width="0.9" fill="none"/><path d="M934.50,446.30 L943.00,444.00 L943.00,448.60 Z" fill="#1a1a1a"/><path d="M968.70,446.30 L960.20,448.60 L960.20,444.00 Z" fill="#1a1a1a"/><path d="M934.5,424 L934.5,453" stroke="#4a4a4a" stroke-width="0.9" fill="none"/><path d="M968.7,405.3 L968.7,453" stroke="#4a4a4a" stroke-width="0.9" fill="none"/><text x="951.4" y="439.6" font-family="Liberation Sans,sans-serif" font-size="12.4" fill="#222" text-anchor="middle" dominant-baseline="central" textLength="12.9" lengthAdjust="spacingAndGlyphs">15</text><path d="M837.6,548.4 V504.2 L1039.2,505.5" fill="none" stroke="#333" stroke-width="1.1"/><path d="M837.6,526.6 L1039.4,527.5" stroke="#333" stroke-width="1.1" fill="none"/><path d="M888.5,504.5 L888.5,526.8" stroke="#333" stroke-width="1" fill="none"/><path d="M938.6,504.8 L938.6,549" stroke="#333" stroke-width="1.1" fill="none"/><path d="M988.4,527.3 L988.4,549.4" stroke="#333" stroke-width="1" fill="none"/></svg>
<span class="t" style="left:963.20px;top:509.00px;font-size:12.2px;line-height:16px;letter-spacing:-0.427px;color:#222;transform:scaleX(0.9882);transform-origin:0 0;">Cvičení č. 12</span>
<span class="t" style="left:863.40px;top:529.00px;font-size:12.2px;line-height:16px;letter-spacing:-0.427px;color:#222;transform:scaleX(0.9770);transform-origin:0 0;">Podklady</span>
<span class="t" style="left:842.00px;top:506.00px;font-size:5.6px;line-height:7px;letter-spacing:0.101px;color:#333;">Datum</span>
<span class="t" style="left:892.90px;top:506.00px;font-size:5.6px;line-height:7px;letter-spacing:-0.022px;color:#333;">Jméno</span>
<span class="t" style="left:940.90px;top:529.00px;font-size:5.6px;line-height:7px;letter-spacing:-0.046px;color:#333;">Práce</span>
<span class="t" style="left:991.40px;top:529.00px;font-size:5.6px;line-height:7px;letter-spacing:-0.065px;color:#333;">Č. výkresu</span>
<div class="b" style="left:74px;top:739px;width:1292px;height:29px;background:#f0f0f0;"></div>
<svg class="b" style="left:0px;top:0px;" width="1366" height="768" viewBox="0 0 1366 768"><path d="M604,746.5 v14 l-8.5,-7 z" fill="#111"/><rect x="605.8" y="746.5" width="2.2" height="14" fill="#111"/><path d="M631,746.5 v14 l-8.5,-7 z" fill="#111"/><path d="M765.5,746.5 v14 l8.5,-7 z" fill="#111"/><rect x="788.8" y="746.5" width="2.2" height="14" fill="#111"/><path d="M792.5,746.5 v14 l8.5,-7 z" fill="#111"/><rect x="641.5" y="743.5" width="115" height="19" fill="#fff" stroke="#9a9a9a"/><path d="M746.5,752.5 h6 l-3,3 z" fill="#111"/><g><rect x="812.5" y="746.5" width="9" height="8" fill="#fff" stroke="#666"/><rect x="812.5" y="745.5" width="9" height="2" fill="#2e6db4"/><rect x="818.5" y="752.5" width="10" height="9" fill="#fff" stroke="#555"/><path d="M818.5,755.5 h10 M818.5,758.5 h10 M822,752.5 v9 M825.5,752.5 v9" stroke="#555" stroke-width="0.8"/><path d="M829,749.5 h-6 m0,0 l3,-3 m-3,3 l3,3" stroke="#2c9a4b" stroke-width="1.6" fill="none"/></g><g opacity="0.45"><rect x="838.5" y="746.5" width="9" height="8" fill="#fff" stroke="#666"/><rect x="838.5" y="745.5" width="9" height="2" fill="#888"/><rect x="844.5" y="752.5" width="10" height="9" fill="#dfe8f5" stroke="#6d8fc0"/><path d="M839,758.5 h6 m0,0 l-3,-3 m3,3 l-3,3" stroke="#2c9a4b" stroke-width="1.6" fill="none"/></g><rect x="1050" y="745" width="24" height="18" fill="#c2d5f2"/><g stroke="#555" fill="#fff" stroke-width="1"><rect x="1030.5" y="747.5" width="10" height="13"/><path d="M1032.5,751.5 h6 M1032.5,754.5 h6 M1032.5,757.5 h6" stroke="#888"/></g><g stroke="#555" fill="#fff" stroke-width="1"><rect x="1056.5" y="746.5" width="10" height="10"/><path d="M1058.5,750.5 h6 M1058.5,753.5 h6" stroke="#888"/><path d="M1056.5,763 v-4.5 h10 v4.5" /><path d="M1058.5,761.5 h6" stroke="#888"/></g><g stroke="#555" fill="#fff" stroke-width="1"><rect x="1079.5" y="748.5" width="6" height="11"/><rect x="1087.5" y="748.5" width="6" height="11"/><path d="M1081,752.5 h3 M1081,755.5 h3 M1089,752.5 h3 M1089,755.5 h3" stroke="#888"/></g><g stroke="#555" fill="none" stroke-width="1"><path d="M1104.5,746.5 h7 v10 h-7 M1120.5,746.5 h-7 v10 h7 M1104.5,759.5 h7 v4 M1120.5,759.5 h-7 v4"/><path d="M1105,749.5 h5 M1105,752.5 h5 M1115,749.5 h5 M1115,752.5 h5" stroke="#888"/></g><path d="M1203.5,751.5 h5 l-2.5,3 z" fill="#111"/><circle cx="1222.5" cy="753.5" r="7" fill="#f6f6f6" stroke="#333" stroke-width="1.1"/><path d="M1218.5,753.5 h8" stroke="#222" stroke-width="1.2"/><circle cx="1340.5" cy="753.5" r="7" fill="#f6f6f6" stroke="#333" stroke-width="1.1"/><path d="M1336.5,753.5 h8 M1340.5,749.5 v8" stroke="#222" stroke-width="1.2"/><path d="M1236,753.5 H1327" stroke="#333" stroke-width="1"/><path d="M1281.5,750 v7" stroke="#333" stroke-width="1"/><rect x="1266" y="749" width="4" height="8" fill="#222"/></svg>
<span class="t" style="left:647.60px;top:746.00px;font-size:11.5px;line-height:15px;letter-spacing:-0.295px;color:#111;">13 / 32</span>
<span class="t" style="left:1144.20px;top:746.00px;font-size:11.5px;line-height:15px;letter-spacing:-0.117px;color:#1e3a5f;">75.00%</span>
<div class="b" style="left:0px;top:0px;width:74px;height:768px;background:linear-gradient(180deg,#0b0b0b 0px,#131313 60px,#1d1d1d 130px,#1e1e1e 300px,#171717 520px,#101010 600px,#0e0e0e 768px);"></div>
<div class="b" style="left:72px;top:0px;width:1px;height:754px;background:#6a6a6a;"></div>
<div class="b" style="left:73px;top:0px;width:1px;height:768px;background:#161616;"></div>
<div class="b" style="left:74px;top:739px;width:1px;height:29px;background:#fcfcfc;"></div>
<div class="b" style="left:1px;top:79px;width:72px;height:44px;background:linear-gradient(122deg,#8a8a8a 0%,#5c5c5c 22%,#474747 44%,#2c2c2c 46%,#2a2a2a 100%);border:1px solid #9c9c9c;border-radius:3px;box-sizing:border-box;box-shadow:0 0 0 1px #050505;"></div>
<div class="b" style="left:1px;top:175px;width:72px;height:44px;background:linear-gradient(122deg,#8a8a8a 0%,#5c5c5c 22%,#474747 44%,#2c2c2c 46%,#2a2a2a 100%);border:1px solid #9c9c9c;border-radius:3px;box-sizing:border-box;box-shadow:0 0 0 1px #050505;"></div>
<div class="b" style="left:1px;top:271px;width:72px;height:44px;background:linear-gradient(125deg,#b4b4b4 0%,#8e8e8e 30%,#868686 48%,#767676 50%,#7c7c7c 100%);border:1px solid #c4c4c4;border-radius:3px;box-sizing:border-box;box-shadow:0 0 0 1px #050505;"></div>
<div class="b" style="left:1px;top:319px;width:72px;height:44px;background:linear-gradient(122deg,#8a8a8a 0%,#5c5c5c 22%,#474747 44%,#2c2c2c 46%,#2a2a2a 100%);border:1px solid #9c9c9c;border-radius:3px;box-sizing:border-box;box-shadow:0 0 0 1px #050505;"></div>
<div class="b" style="left:1px;top:367px;width:72px;height:44px;background:linear-gradient(122deg,#8a8a8a 0%,#5c5c5c 22%,#474747 44%,#2c2c2c 46%,#2a2a2a 100%);border:1px solid #9c9c9c;border-radius:3px;box-sizing:border-box;box-shadow:0 0 0 1px #050505;"></div>
<div class="b" style="left:1px;top:415px;width:72px;height:44px;background:linear-gradient(122deg,#8a8a8a 0%,#5c5c5c 22%,#474747 44%,#2c2c2c 46%,#2a2a2a 100%);border:1px solid #9c9c9c;border-radius:3px;box-sizing:border-box;box-shadow:0 0 0 1px #050505;"></div>
<div class="b" style="left:1px;top:463px;width:72px;height:44px;background:linear-gradient(122deg,#8a8a8a 0%,#5c5c5c 22%,#474747 44%,#2c2c2c 46%,#2a2a2a 100%);border:1px solid #9c9c9c;border-radius:3px;box-sizing:border-box;box-shadow:0 0 0 1px #050505;"></div>
<div class="b" style="left:1px;top:754px;width:72px;height:13px;background:linear-gradient(165deg,#5c5c5c 0%,#3a3a3a 35%,#1c1c1c 55%,#1a1a1a 100%);border:1px solid #808080;border-radius:2px;box-sizing:border-box;"></div>
<svg class="b" style="left:0px;top:0px;" width="74" height="768" viewBox="0 0 74 768"><defs><radialGradient id="orb" cx="0.5" cy="0.35" r="0.75"><stop offset="0" stop-color="#6fb4e8"/><stop offset="0.45" stop-color="#1d64b4"/><stop offset="0.8" stop-color="#0c3c84"/><stop offset="1" stop-color="#0a2c66"/></radialGradient><radialGradient id="orbg" cx="0.5" cy="1" r="0.6"><stop offset="0" stop-color="#2fe0ff" stop-opacity="0.95"/><stop offset="1" stop-color="#2fe0ff" stop-opacity="0"/></radialGradient><linearGradient id="orbh" x1="0" x2="0" y1="0" y2="1"><stop offset="0" stop-color="#ffffff" stop-opacity="0.75"/><stop offset="1" stop-color="#ffffff" stop-opacity="0.08"/></linearGradient><radialGradient id="ffg" cx="0.45" cy="0.35" r="0.6"><stop offset="0" stop-color="#5cc0f0"/><stop offset="0.6" stop-color="#1560b8"/><stop offset="1" stop-color="#0a2d7a"/></radialGradient><linearGradient id="fox" x1="0" x2="1" y1="0" y2="1"><stop offset="0" stop-color="#ffb52e"/><stop offset="0.5" stop-color="#f4711b"/><stop offset="1" stop-color="#d9441a"/></linearGradient><linearGradient id="fold" x1="0" x2="0" y1="0" y2="1"><stop offset="0" stop-color="#fdf1b8"/><stop offset="1" stop-color="#ecc95c"/></linearGradient><linearGradient id="fblue" x1="0" x2="0" y1="0" y2="1"><stop offset="0" stop-color="#bfe6fa"/><stop offset="1" stop-color="#4aa4da"/></linearGradient><linearGradient id="wmp" x1="0" x2="1" y1="0" y2="0"><stop offset="0" stop-color="#8ec4e8"/><stop offset="1" stop-color="#4f97cc"/></linearGradient><radialGradient id="wmo" cx="0.4" cy="0.35" r="0.7"><stop offset="0" stop-color="#ffb060"/><stop offset="1" stop-color="#e8600a"/></radialGradient><linearGradient id="pal" x1="0" x2="1" y1="0" y2="1"><stop offset="0" stop-color="#eef7fd"/><stop offset="1" stop-color="#8cc4ea"/></linearGradient></defs><rect x="5" y="61" width="1" height="1" fill="#4a4a4a"/><rect x="9" y="61" width="1" height="1" fill="#4a4a4a"/><rect x="13" y="61" width="1" height="1" fill="#4a4a4a"/><rect x="17" y="61" width="1" height="1" fill="#4a4a4a"/><rect x="21" y="61" width="1" height="1" fill="#4a4a4a"/><rect x="25" y="61" width="1" height="1" fill="#4a4a4a"/><rect x="29" y="61" width="1" height="1" fill="#4a4a4a"/><rect x="33" y="61" width="1" height="1" fill="#4a4a4a"/><rect x="37" y="61" width="1" height="1" fill="#4a4a4a"/><rect x="41" y="61" width="1" height="1" fill="#4a4a4a"/><rect x="45" y="61" width="1" height="1" fill="#4a4a4a"/><rect x="49" y="61" width="1" height="1" fill="#4a4a4a"/><rect x="53" y="61" width="1" height="1" fill="#4a4a4a"/><rect x="57" y="61" width="1" height="1" fill="#4a4a4a"/><rect x="61" y="61" width="1" height="1" fill="#4a4a4a"/><rect x="65" y="61" width="1" height="1" fill="#4a4a4a"/><rect x="69" y="61" width="1" height="1" fill="#4a4a4a"/><rect x="5" y="63" width="1" height="1" fill="#4a4a4a"/><rect x="9" y="63" width="1" height="1" fill="#4a4a4a"/><rect x="13" y="63" width="1" height="1" fill="#4a4a4a"/><rect x="17" y="63" width="1" height="1" fill="#4a4a4a"/><rect x="21" y="63" width="1" height="1" fill="#4a4a4a"/><rect x="25" y="63" width="1" height="1" fill="#4a4a4a"/><rect x="29" y="63" width="1" height="1" fill="#4a4a4a"/><rect x="33" y="63" width="1" height="1" fill="#4a4a4a"/><rect x="37" y="63" width="1" height="1" fill="#4a4a4a"/><rect x="41" y="63" width="1" height="1" fill="#4a4a4a"/><rect x="45" y="63" width="1" height="1" fill="#4a4a4a"/><rect x="49" y="63" width="1" height="1" fill="#4a4a4a"/><rect x="53" y="63" width="1" height="1" fill="#4a4a4a"/><rect x="57" y="63" width="1" height="1" fill="#4a4a4a"/><rect x="61" y="63" width="1" height="1" fill="#4a4a4a"/><rect x="65" y="63" width="1" height="1" fill="#4a4a4a"/><rect x="69" y="63" width="1" height="1" fill="#4a4a4a"/><rect x="5" y="65" width="1" height="1" fill="#4a4a4a"/><rect x="9" y="65" width="1" height="1" fill="#4a4a4a"/><rect x="13" y="65" width="1" height="1" fill="#4a4a4a"/><rect x="17" y="65" width="1" height="1" fill="#4a4a4a"/><rect x="21" y="65" width="1" height="1" fill="#4a4a4a"/><rect x="25" y="65" width="1" height="1" fill="#4a4a4a"/><rect x="29" y="65" width="1" height="1" fill="#4a4a4a"/><rect x="33" y="65" width="1" height="1" fill="#4a4a4a"/><rect x="37" y="65" width="1" height="1" fill="#4a4a4a"/><rect x="41" y="65" width="1" height="1" fill="#4a4a4a"/><rect x="45" y="65" width="1" height="1" fill="#4a4a4a"/><rect x="49" y="65" width="1" height="1" fill="#4a4a4a"/><rect x="53" y="65" width="1" height="1" fill="#4a4a4a"/><rect x="57" y="65" width="1" height="1" fill="#4a4a4a"/><rect x="61" y="65" width="1" height="1" fill="#4a4a4a"/><rect x="65" y="65" width="1" height="1" fill="#4a4a4a"/><rect x="69" y="65" width="1" height="1" fill="#4a4a4a"/><rect x="5" y="67" width="1" height="1" fill="#4a4a4a"/><rect x="9" y="67" width="1" height="1" fill="#4a4a4a"/><rect x="13" y="67" width="1" height="1" fill="#4a4a4a"/><rect x="17" y="67" width="1" height="1" fill="#4a4a4a"/><rect x="21" y="67" width="1" height="1" fill="#4a4a4a"/><rect x="25" y="67" width="1" height="1" fill="#4a4a4a"/><rect x="29" y="67" width="1" height="1" fill="#4a4a4a"/><rect x="33" y="67" width="1" height="1" fill="#4a4a4a"/><rect x="37" y="67" width="1" height="1" fill="#4a4a4a"/><rect x="41" y="67" width="1" height="1" fill="#4a4a4a"/><rect x="45" y="67" width="1" height="1" fill="#4a4a4a"/><rect x="49" y="67" width="1" height="1" fill="#4a4a4a"/><rect x="53" y="67" width="1" height="1" fill="#4a4a4a"/><rect x="57" y="67" width="1" height="1" fill="#4a4a4a"/><rect x="61" y="67" width="1" height="1" fill="#4a4a4a"/><rect x="65" y="67" width="1" height="1" fill="#4a4a4a"/><rect x="69" y="67" width="1" height="1" fill="#4a4a4a"/><rect x="5" y="586" width="1" height="1" fill="#4a4a4a"/><rect x="9" y="586" width="1" height="1" fill="#4a4a4a"/><rect x="13" y="586" width="1" height="1" fill="#4a4a4a"/><rect x="17" y="586" width="1" height="1" fill="#4a4a4a"/><rect x="21" y="586" width="1" height="1" fill="#4a4a4a"/><rect x="25" y="586" width="1" height="1" fill="#4a4a4a"/><rect x="29" y="586" width="1" height="1" fill="#4a4a4a"/><rect x="33" y="586" width="1" height="1" fill="#4a4a4a"/><rect x="37" y="586" width="1" height="1" fill="#4a4a4a"/><rect x="41" y="586" width="1" height="1" fill="#4a4a4a"/><rect x="45" y="586" width="1" height="1" fill="#4a4a4a"/><rect x="49" y="586" width="1" height="1" fill="#4a4a4a"/><rect x="53" y="586" width="1" height="1" fill="#4a4a4a"/><rect x="57" y="586" width="1" height="1" fill="#4a4a4a"/><rect x="61" y="586" width="1" height="1" fill="#4a4a4a"/><rect x="65" y="586" width="1" height="1" fill="#4a4a4a"/><rect x="69" y="586" width="1" height="1" fill="#4a4a4a"/><rect x="5" y="588" width="1" height="1" fill="#4a4a4a"/><rect x="9" y="588" width="1" height="1" fill="#4a4a4a"/><rect x="13" y="588" width="1" height="1" fill="#4a4a4a"/><rect x="17" y="588" width="1" height="1" fill="#4a4a4a"/><rect x="21" y="588" width="1" height="1" fill="#4a4a4a"/><rect x="25" y="588" width="1" height="1" fill="#4a4a4a"/><rect x="29" y="588" width="1" height="1" fill="#4a4a4a"/><rect x="33" y="588" width="1" height="1" fill="#4a4a4a"/><rect x="37" y="588" width="1" height="1" fill="#4a4a4a"/><rect x="41" y="588" width="1" height="1" fill="#4a4a4a"/><rect x="45" y="588" width="1" height="1" fill="#4a4a4a"/><rect x="49" y="588" width="1" height="1" fill="#4a4a4a"/><rect x="53" y="588" width="1" height="1" fill="#4a4a4a"/><rect x="57" y="588" width="1" height="1" fill="#4a4a4a"/><rect x="61" y="588" width="1" height="1" fill="#4a4a4a"/><rect x="65" y="588" width="1" height="1" fill="#4a4a4a"/><rect x="69" y="588" width="1" height="1" fill="#4a4a4a"/><rect x="5" y="590" width="1" height="1" fill="#4a4a4a"/><rect x="9" y="590" width="1" height="1" fill="#4a4a4a"/><rect x="13" y="590" width="1" height="1" fill="#4a4a4a"/><rect x="17" y="590" width="1" height="1" fill="#4a4a4a"/><rect x="21" y="590" width="1" height="1" fill="#4a4a4a"/><rect x="25" y="590" width="1" height="1" fill="#4a4a4a"/><rect x="29" y="590" width="1" height="1" fill="#4a4a4a"/><rect x="33" y="590" width="1" height="1" fill="#4a4a4a"/><rect x="37" y="590" width="1" height="1" fill="#4a4a4a"/><rect x="41" y="590" width="1" height="1" fill="#4a4a4a"/><rect x="45" y="590" width="1" height="1" fill="#4a4a4a"/><rect x="49" y="590" width="1" height="1" fill="#4a4a4a"/><rect x="53" y="590" width="1" height="1" fill="#4a4a4a"/><rect x="57" y="590" width="1" height="1" fill="#4a4a4a"/><rect x="61" y="590" width="1" height="1" fill="#4a4a4a"/><rect x="65" y="590" width="1" height="1" fill="#4a4a4a"/><rect x="69" y="590" width="1" height="1" fill="#4a4a4a"/><rect x="5" y="592" width="1" height="1" fill="#4a4a4a"/><rect x="9" y="592" width="1" height="1" fill="#4a4a4a"/><rect x="13" y="592" width="1" height="1" fill="#4a4a4a"/><rect x="17" y="592" width="1" height="1" fill="#4a4a4a"/><rect x="21" y="592" width="1" height="1" fill="#4a4a4a"/><rect x="25" y="592" width="1" height="1" fill="#4a4a4a"/><rect x="29" y="592" width="1" height="1" fill="#4a4a4a"/><rect x="33" y="592" width="1" height="1" fill="#4a4a4a"/><rect x="37" y="592" width="1" height="1" fill="#4a4a4a"/><rect x="41" y="592" width="1" height="1" fill="#4a4a4a"/><rect x="45" y="592" width="1" height="1" fill="#4a4a4a"/><rect x="49" y="592" width="1" height="1" fill="#4a4a4a"/><rect x="53" y="592" width="1" height="1" fill="#4a4a4a"/><rect x="57" y="592" width="1" height="1" fill="#4a4a4a"/><rect x="61" y="592" width="1" height="1" fill="#4a4a4a"/><rect x="65" y="592" width="1" height="1" fill="#4a4a4a"/><rect x="69" y="592" width="1" height="1" fill="#4a4a4a"/><circle cx="36.9" cy="27.8" r="18.3" fill="#0a1830" stroke="#6c8eb0" stroke-width="0.9"/><circle cx="36.9" cy="27.8" r="17.5" fill="url(#orb)"/><circle cx="36.9" cy="30.4" r="16" fill="url(#orbg)"/><path d="M20.2,24.4 C22.6,13 32.4,10.4 36.9,10.4 C41.4,10.4 51.2,13 53.6,24.4 C45,20 30.600,21.400 20.2,24.4 Z" fill="url(#orbh)"/><g transform="translate(37.5,27.7) scale(1.22) translate(-36.1,-26.7)"><path d="M29.2,18.6 C31.6,17.2 34,17.2 36.2,18.4 L34.4,25.6 C32.2,24.4 29.8,24.6 27.6,25.8 Z" fill="#ee5a24"/><path d="M37.8,19.2 C40,20.4 42.4,20.4 44.8,19 L43,26 C40.6,27.4 38.2,27.4 36,26.2 Z" fill="#8cc63e"/><path d="M27.2,27.4 C29.4,26.2 31.8,26 34,27.2 L32.2,34.4 C30,33.2 27.6,33.4 25.4,34.6 Z" fill="#3e96e0"/><path d="M35.6,27.8 C37.8,29 40.2,29 42.6,27.6 L40.8,34.8 C38.4,36.2 36,36.2 33.8,35 Z" fill="#fcc630"/></g><path d="M21,92 l1.2,-3 h13 l1.4,2.6 h15.6 v24.4 h-31.2 z" fill="url(#fold)" stroke="#c9a544" stroke-width="0.8"/><rect x="25" y="89" width="3" height="2" fill="#1eb43c"/><rect x="33" y="91" width="3" height="2" fill="#d83a2a"/><rect x="41" y="93" width="3" height="2" fill="#2f7fe0"/><rect x="28" y="89.4" width="6" height="1.6" fill="#fff"/><rect x="36.4" y="91.4" width="6" height="1.6" fill="#fff"/><rect x="44.4" y="93.4" width="6" height="1.6" fill="#fff"/><path d="M21,96 h31.2 v20 h-31.2 z" fill="url(#fold)" stroke="#d2ae4c" stroke-width="0.7"/><path d="M25,117 v-11 q0,-2.4 2.4,-2.4 h19 q2.4,0 2.4,2.4 v11 h-5.6 v-7.6 h-12.6 v7.6 z" fill="url(#fblue)" stroke="#3d8cc4" stroke-width="0.7"/><path d="M28.4,98 l0.8,5 l4,-2.6 l-3,3.4 l4,1 l-4.2,0.4 l-1.6,3 l-0.6,-3.4 l-3.6,-1 l3.4,-0.8 z" fill="#fff" opacity="0.9"/><path d="M27,139.5 l21.6,-1.6 v25 l-21.6,-1.6 z" fill="#5b9fd0"/><path d="M25,139 l21.6,-1.2 v24.8 l-21.6,-1.4 z" fill="#7ab6e0"/><path d="M22.8,138.6 l21.6,-0.8 v24.6 l-21.6,-1.2 z" fill="url(#wmp)" stroke="#4a8cc0" stroke-width="0.5"/><circle cx="33.4" cy="150" r="8.6" fill="url(#wmo)" stroke="#fbe0c0" stroke-width="0.6"/><path d="M30.4,144.6 v10.8 l9,-5.4 z" fill="#fff"/><circle cx="38" cy="195.6" r="13" fill="url(#ffg)"/><path d="M24.2,186.6 C22.4,190 21.6,194.6 22.6,199.4 C24.2,206.8 30.4,211.6 37.4,211.6 C45.4,211.6 51.6,205.6 51.8,197.4 C51.8,193 50.6,189.2 48.4,186.6 C49.8,190.4 49.6,194.4 48,197.4 C46.4,200.6 42.6,203 38.6,202.6 C35.6,202.4 33,200.8 32,198.6 C33.8,199.6 36.4,199.4 37.8,198 C39,196.8 40.4,197 41,196.2 C39.4,194.6 36.2,195.2 34.4,193.4 C33.4,192.4 33.6,190.6 34.6,189.6 C33.6,189.2 32.4,189.4 31.6,190 C31.8,188.6 32.8,187 34.2,186.2 C31,186 28.4,187.4 27,189.6 C26.2,188.8 25.2,187.8 24.2,186.6 Z" fill="url(#fox)"/><path d="M46.4,184.8 C50.4,188.4 52.4,193.6 51.6,199 C50.8,193.6 49,189 46.4,184.8 Z" fill="#ffe14a"/><circle cx="37" cy="245" r="14.4" fill="#e8e8e8"/><path d="M37,245 L24.53,237.8 A14.4,14.4 0 0 1 49.47,237.8 Z" fill="#de3b2e"/><path d="M37,230.6 A14.4,14.4 0 0 1 49.47,237.8 L37,237.8 Z" fill="#de3b2e"/><path d="M49.47,237.8 A14.4,14.4 0 0 1 37,259.4 L43.2,248.6 L43.2,237.8 Z" fill="#fbce1c"/><path d="M37,245 L49.47,237.8 L37,237.8 Z" fill="#fbce1c"/><path d="M37,245 L43.3,248.6 L37,259.4 Z" fill="#fbce1c"/><path d="M24.53,237.8 A14.4,14.4 0 0 0 37,259.4 L43.3,248.6 L30.8,248.6 Z" fill="#3fa845"/><path d="M37,245 L24.53,237.8 L30.8,248.6 Z" fill="#3fa845"/><circle cx="37" cy="245" r="6.6" fill="#f4f4f4"/><circle cx="37" cy="245" r="5.3" fill="#3f86e0"/><path d="M24.5,277.5 h19.6 l5.2,5.2 v25.6 h-24.8 z" fill="#fcfcf8" stroke="#c8c8b8" stroke-width="0.8"/><path d="M44.1,277.5 v5.2 h5.2 z" fill="#d8d8cc" stroke="#aaa" stroke-width="0.5"/><rect x="28.4" y="285.4" width="17" height="15.6" fill="#ece8d8" stroke="#222" stroke-width="0.9"/><rect x="28.8" y="285.8" width="16.2" height="2.4" fill="#1c2a9c"/><rect x="39" y="286.4" width="1" height="1" fill="#fff"/><rect x="41" y="286.4" width="1" height="1" fill="#fff"/><rect x="43" y="286.4" width="1" height="1" fill="#fff"/><circle cx="32.6" cy="293.4" r="1.7" fill="#d02020"/><path d="M35.4,291.6 l3,1.8 l-3,1.8 z" fill="#2040e0"/><path d="M39.8,295.2 h3.2 v-2 l-1.6,-1.8 l-1.6,1.8 z" fill="#20a030"/><path d="M31,297.6 h3 M35,297.6 h3 M39.4,297.6 h3" stroke="#555" stroke-width="0.8"/><rect x="21.2" y="329.2" width="31.8" height="23.2" fill="#8e8e8e" stroke="#111" stroke-width="0.8"/><rect x="22" y="330" width="30.2" height="4.2" fill="#111"/><rect x="27" y="330.4" width="17.4" height="3.2" fill="#0000f0"/><rect x="22.6" y="330.6" width="3.4" height="2.8" fill="#ccc"/><rect x="45.6" y="330.6" width="2.6" height="2.8" fill="#ccc"/><rect x="49.2" y="330.6" width="2.6" height="2.8" fill="#ccc"/><rect x="21.799999999999997" y="335.0" width="9.4" height="6.4" fill="#111"/><rect x="22.4" y="335.6" width="2" height="2" fill="#fff"/><rect x="25.4" y="335.6" width="2" height="2" fill="#fff"/><rect x="28.4" y="335.6" width="2" height="2" fill="#fff"/><rect x="22.4" y="338.6" width="2" height="2" fill="#fff"/><rect x="25.4" y="338.6" width="2" height="2" fill="#fff"/><rect x="28.4" y="338.6" width="2" height="2" fill="#fff"/><rect x="33.4" y="335.0" width="6.4" height="6.4" fill="#111"/><rect x="34" y="335.6" width="2" height="2" fill="#fff"/><rect x="37" y="335.6" width="2" height="2" fill="#fff"/><rect x="34" y="338.6" width="2" height="2" fill="#fff"/><rect x="37" y="338.6" width="2" height="2" fill="#fff"/><rect x="42.8" y="335.0" width="9.4" height="9.4" fill="#111"/><rect x="43.4" y="335.6" width="2" height="2" fill="#fff"/><rect x="46.4" y="335.6" width="2" height="2" fill="#fff"/><rect x="49.4" y="335.6" width="2" height="2" fill="#fff"/><rect x="43.4" y="338.6" width="2" height="2" fill="#fff"/><rect x="46.4" y="338.6" width="2" height="2" fill="#fff"/><rect x="49.4" y="338.6" width="2" height="2" fill="#fff"/><rect x="43.4" y="341.6" width="2" height="2" fill="#fff"/><rect x="46.4" y="341.6" width="2" height="2" fill="#fff"/><rect x="49.4" y="341.6" width="2" height="2" fill="#fff"/><rect x="21.799999999999997" y="344.2" width="9.4" height="6.4" fill="#111"/><rect x="22.4" y="344.8" width="2" height="2" fill="#fff"/><rect x="25.4" y="344.8" width="2" height="2" fill="#fff"/><rect x="28.4" y="344.8" width="2" height="2" fill="#fff"/><rect x="22.4" y="347.8" width="2" height="2" fill="#fff"/><rect x="25.4" y="347.8" width="2" height="2" fill="#fff"/><rect x="28.4" y="347.8" width="2" height="2" fill="#fff"/><rect x="33.4" y="344.2" width="6.4" height="6.4" fill="#111"/><rect x="34" y="344.8" width="2" height="2" fill="#fff"/><rect x="37" y="344.8" width="2" height="2" fill="#fff"/><rect x="34" y="347.8" width="2" height="2" fill="#fff"/><rect x="37" y="347.8" width="2" height="2" fill="#fff"/><rect x="42.8" y="343.79999999999995" width="9.4" height="9.4" fill="#111"/><rect x="43.4" y="344.4" width="2" height="2" fill="#fff"/><rect x="46.4" y="344.4" width="2" height="2" fill="#fff"/><rect x="49.4" y="344.4" width="2" height="2" fill="#fff"/><rect x="43.4" y="347.4" width="2" height="2" fill="#fff"/><rect x="46.4" y="347.4" width="2" height="2" fill="#fff"/><rect x="49.4" y="347.4" width="2" height="2" fill="#fff"/><rect x="43.4" y="350.4" width="2" height="2" fill="#fff"/><rect x="46.4" y="350.4" width="2" height="2" fill="#fff"/><rect x="49.4" y="350.4" width="2" height="2" fill="#fff"/><path d="M21.6,372.8 h8.6 l22.6,32 h-8.6 z" fill="#000" stroke="#e8e8e8" stroke-width="0.5"/><path d="M50.6,372.8 h2.6 l-13.6,14.6 l-1.300,-1.500 z M21.400,404.800 h2.6 l12.400,-13.200 l-1.300,-1.500 z" fill="#000" stroke="#e8e8e8" stroke-width="0.5"/><rect x="27.4" y="421" width="5.4" height="30" fill="#2d5f8a" stroke="#183a5c" stroke-width="0.5"/><path d="M33,427 h13.4 l6,6 v18.6 h-19.4 z" fill="#f4f6f8" stroke="#b8c0c8" stroke-width="0.6"/><path d="M42.6,422.2 c5,0 9.4,3.6 9.6,10 l-2.8,-3 l-3,2.6 c0.4,-4 -1.2,-7 -3.8,-9.600 z" fill="#8fb522"/><rect x="35.8" y="436.600" width="15" height="11.2" fill="#8aa818"/><rect x="37.400" y="438.6" width="5" height="3" fill="#fff"/><rect x="44" y="438.6" width="5" height="3" fill="#fff"/><rect x="37.4" y="443" width="5" height="3" fill="#fff"/><rect x="44" y="443" width="5" height="3" fill="#fff"/><path d="M24,426.600 c4,-3.6 8,-1 11,-0.8 c3,0.2 5.600,-2.400 9,-1.800 c-3,0.400 -5,3.200 -9,3.200 c-3.6,0 -6.400,-2 -11,-0.600 z" fill="#fff"/><path d="M22,433.4 c4,-3.6 8,-1 11,-0.8 c3,0.2 5.6,-2.4 9,-1.800 c-3,0.4 -5,3.200 -9,3.200 c-3.6,0 -6.400,-2 -11,-0.600 z" fill="#fff"/><path d="M21,490 C21,482 28,475.6 37,475.6 C45,475.6 50,480.400 50,486.400 C50,493.6 43,498 35.6,498 C31.6,498 29.600,496.400 29.8,494.400 C30,492.600 28.400,491.200 26,492 C23,493 21,492.400 21,490 Z" fill="url(#pal)" stroke="#6fb0dc" stroke-width="0.8"/><circle cx="34.6" cy="488.600" r="2.2" fill="#1a1a1a"/><circle cx="26.6" cy="486.600" r="2.600" fill="#e0342c"/><circle cx="31.6" cy="481.400" r="2.600" fill="#5cb82c"/><circle cx="38" cy="479.6" r="2.600" fill="#f8b818"/><path d="M35.6,500.8 L43.6,482 L46,483 L37,500.400 Z" fill="#f08a1c"/><path d="M43.6,482 L45.400,477 L47.6,478 L46,483 Z" fill="#9aa0a8"/><path d="M45.400,477 C44.400,473 45.6,470.600 47.400,470 L53,474.600 C51.400,476.600 49.600,478.200 47.600,478 Z" fill="#d8a868"/><path d="M57.6,635.8 v7.6 l4.6,-3.8 z" fill="#dde6f4"/><path d="M2,657.5 v14" stroke="#f0f0f0" stroke-width="1.4"/><path d="M3.4,658 c2.400,-1.200 4,-0.400 5.600,0.400 c1.600,0.800 3,1.200 5,0.200 v6.400 c-2,1 -3.400,0.600 -5,-0.200 c-1.600,-0.800 -3.200,-1.600 -5.600,-0.400 z" fill="#f4f4f4"/><circle cx="10.8" cy="667.2" r="4.300" fill="#e02828" stroke="#fff" stroke-width="0.7"/><path d="M8.800,665.2 l4,4 M12.800,665.2 l-4,4" stroke="#fff" stroke-width="1.300"/><rect x="25.6" y="659.6" width="7" height="11.400" rx="1" fill="none" stroke="#d8d8d8" stroke-width="1.1"/><rect x="27.6" y="658" width="3" height="1.600" fill="#d8d8d8"/><path d="M31,662 h6.400 v3 c0,2 -1.400,3 -3.200,3 c-1.800,0 -3.200,-1 -3.200,-3 z" fill="#f4f4f4"/><path d="M32.600,658.400 v3.600 M35.800,658.400 v3.600" stroke="#f4f4f4" stroke-width="1.200"/><path d="M34.200,668 v3" stroke="#f4f4f4" stroke-width="1.200"/><path d="M25.400,664.200 l6.800,6.600 M32.200,664.200 l-6.800,6.600" stroke="#e81818" stroke-width="1.500"/><rect x="49.4" y="667.0" width="2.100" height="2.4" fill="#f6f6f6"/><rect x="52.4" y="665.0" width="2.100" height="4.4" fill="#f6f6f6"/><rect x="55.4" y="663.0" width="2.100" height="6.4" fill="#f6f6f6"/><rect x="58.4" y="661.0" width="2.100" height="8.4" fill="#f6f6f6"/><rect x="61.4" y="659.0" width="2.100" height="10.4" fill="#f6f6f6"/><path d="M1.600,685.400 h2.600 l3.400,-3.800 v13.200 l-3.400,-3.800 h-2.600 z" fill="#f0f0f0"/><circle cx="10.800" cy="691.2" r="4.300" fill="#e02828" stroke="#fff" stroke-width="0.7"/><circle cx="10.800" cy="691.2" r="2.500" fill="none" stroke="#fff" stroke-width="1.100"/><path d="M9,689.400 l3.600,3.600" stroke="#fff" stroke-width="1.100"/></svg>
<span class="t" style="left:28.40px;top:606.00px;font-size:11.5px;line-height:15px;letter-spacing:-0.403px;color:#ebe7dc;transform:scaleX(0.9360);transform-origin:0 0;">EN</span>
<span class="t" style="left:21.60px;top:702.00px;font-size:12px;line-height:16px;letter-spacing:-0.420px;color:#f2f2f2;transform:scaleX(0.9488);transform-origin:0 0;">19:30</span>
<span class="t" style="left:5.20px;top:719.00px;font-size:12px;line-height:16px;letter-spacing:-0.273px;color:#f2f2f2;">Wednesday</span>
<span class="t" style="left:6.60px;top:736.00px;font-size:12px;line-height:16px;letter-spacing:-0.157px;color:#f2f2f2;">11/02/2015</span>
<svg class="b" style="left:0px;top:0px;" width="1366" height="768" viewBox="0 0 1366 768"><path d="M80.2,5 h12.4 l3.6,3.600 v12.400 h-16 z" fill="#f5821f"/><path d="M92.6,5 v3.600 h3.600 z" fill="#fff" opacity="0.85"/><path d="M92.400,10.600 C90.800,9 88.200,8.800 86.200,10.200 C84,11.800 83.600,14.800 85.200,16.800 C86.800,18.800 89.800,19 91.600,17.400 C92.600,16.400 93,15 92.600,13.800 L89.400,15 L90.600,12.400 C89.400,11.600 88,11.800 87.200,12.800 C86.400,13.800 86.600,15.200 87.600,16 " fill="none" stroke="#fff" stroke-width="1.700" stroke-linecap="round"/><path d="M106,20 v-13.800 h5.400 l1.600,2 h6.600 v3 h-9.400 l-4.200,8.800 z" fill="#ebb56a"/><path d="M106.400,20.200 l4.200,-9 h11.800 l-4.200,9 z" fill="#ebb56a"/><path d="M131.200,6.200 h13.600 v13.400 h-13.600 z" fill="#c9b3d9"/><rect x="134.200" y="6.200" width="7.600" height="4.800" fill="#f0f0f0"/><rect x="138.800" y="7" width="1.800" height="3.200" fill="#c9b3d9"/><rect x="133.600" y="13.800" width="8.800" height="5.800" fill="#f0f0f0"/><rect x="134.800" y="15" width="6.400" height="1" fill="#c9b3d9"/><rect x="157.400" y="5.600" width="9.400" height="6" fill="#fff" stroke="#767676" stroke-width="1.100"/><rect x="158" y="8.600" width="8.200" height="2.200" fill="#2e6db4"/><path d="M154.600,17.400 v-6.400 h15 v6.400 h-2.800 v-3.200 h-9.400 v3.200 z" fill="#767676"/><rect x="157.400" y="14.600" width="9.400" height="5.600" fill="#fff" stroke="#767676" stroke-width="1.100"/><path d="M159.400,17.400 h5.400" stroke="#2e6db4" stroke-width="1.200"/><rect x="178.400" y="7.600" width="15.200" height="10.800" fill="#fff" stroke="#767676" stroke-width="1.200"/><path d="M180.600,12.400 h7 M180.600,14.400 h7 M180.600,16.300 h5" stroke="#555" stroke-width="0.800"/><rect x="189.400" y="9.400" width="2.200" height="2.200" fill="#2e6db4"/><path d="M206.6,7.2 h6.4 l3,3 v9.4 h-9.4 z" fill="#fff" stroke="#767676" stroke-width="1.2" stroke-linejoin="round"/><path d="M213.0,7.2 v3 h3" fill="none" stroke="#767676" stroke-width="0.96"/><path d="M206,5.200 v9 M201.600,9.700 h8.800 M203,6.600 l6,6.200 M209,6.600 l-6,6.200" stroke="#d0372a" stroke-width="1.100"/><path d="M229.400,10.400 C232,6.600 237.400,6 240.200,9.400 C242.600,12.400 241.600,17 238,19" fill="none" stroke="#a9c3df" stroke-width="1.700"/><path d="M226.200,8 l6.400,1 l-4,5 z" fill="#a9c3df"/><path d="M262.800,10.400 C260.200,6.600 254.800,6 252,9.400 C249.600,12.400 250.600,17 254.200,19" fill="none" stroke="#a9c3df" stroke-width="1.700"/><path d="M266,8 l-6.400,1 l4,5 z" fill="#a9c3df"/><path d="M273.800,10.200 h5.600" stroke="#111" stroke-width="1.200"/><path d="M273.600,12.200 h6 l-3,3.800 z" fill="#111"/><g fill="none" stroke="#3c4058" stroke-width="1"><rect x="1237.3" y="4.6" width="4.6" height="4.6" stroke-width="0.9"/><path d="M1240.8,8.1 L1238.3999999999999,5.699999999999999" stroke-width="0.8"/><rect x="1245.2" y="4.6" width="4.6" height="4.6" stroke-width="0.9"/><path d="M1246.3,8.1 L1248.7,5.699999999999999" stroke-width="0.8"/><rect x="1237.3" y="12" width="4.6" height="4.6" stroke-width="0.9"/><path d="M1240.8,13.100000000000001 L1238.3999999999999,15.5" stroke-width="0.8"/><rect x="1245.2" y="12" width="4.6" height="4.6" stroke-width="0.9"/><path d="M1246.3,13.100000000000001 L1248.7,15.5" stroke-width="0.8"/></g><rect x="1273.6" y="8.3" width="9.8" height="4.3" rx="1.3" fill="none" stroke="#3c4058" stroke-width="1.2"/><rect x="1308.5" y="8.7" width="7" height="6.8" rx="1.4" fill="#f0f0f0" stroke="#3c4058" stroke-width="1.2"/><path d="M1311.5,8.600 v-1.600 a1.400,1.400 0 0 1 1.400,-1.400 h4.200 a1.400,1.400 0 0 1 1.400,1.400 v4.200 a1.400,1.400 0 0 1 -1.400,1.400 h-1.600" fill="none" stroke="#3c4058" stroke-width="1.2"/><rect x="1310.6" y="10.900" width="2.900" height="2.300" fill="none" stroke="#3c4058" stroke-width="0.9"/><path d="M1345,7.600 l7,6.200 M1352,7.600 l-7,6.200" stroke="#3c4058" stroke-width="3.600" stroke-linecap="round"/><path d="M1345,7.600 l7,6.200 M1352,7.600 l-7,6.200" stroke="#f0f0f0" stroke-width="1.500" stroke-linecap="round"/><path d="M1115.600,44 v-13.600 h5.200 l1.400,2 h5.800 v11.600 z" fill="#ebb56a"/><circle cx="1126" cy="39" r="3.600" fill="#f6f6f6" stroke="#444" stroke-width="1.300"/><path d="M1128.600,41.800 l3.200,3" stroke="#333" stroke-width="1.800" stroke-linecap="round"/><circle cx="1246.600" cy="35.400" r="3.700" fill="none" stroke="#2e6db4" stroke-width="1.500"/><path d="M1244,38.400 l-4.200,4.200" stroke="#2e6db4" stroke-width="2" stroke-linecap="round"/><path d="M1275.64,36.80 L1275.61,37.25 L1275.45,37.68 L1274.59,37.95 L1273.72,38.12 L1273.51,38.40 L1273.38,38.70 L1273.26,39.00 L1273.21,39.35 L1273.71,40.08 L1274.12,40.88 L1273.93,41.30 L1273.63,41.63 L1273.30,41.93 L1272.88,42.12 L1272.08,41.71 L1271.35,41.21 L1271.00,41.26 L1270.70,41.38 L1270.40,41.51 L1270.12,41.72 L1269.95,42.59 L1269.68,43.45 L1269.25,43.61 L1268.80,43.64 L1268.35,43.61 L1267.92,43.45 L1267.65,42.59 L1267.48,41.72 L1267.20,41.51 L1266.90,41.38 L1266.60,41.26 L1266.25,41.21 L1265.52,41.71 L1264.72,42.12 L1264.30,41.93 L1263.97,41.63 L1263.67,41.30 L1263.48,40.88 L1263.89,40.08 L1264.39,39.35 L1264.34,39.00 L1264.22,38.70 L1264.09,38.40 L1263.88,38.12 L1263.01,37.95 L1262.15,37.68 L1261.99,37.25 L1261.96,36.80 L1261.99,36.35 L1262.15,35.92 L1263.01,35.65 L1263.88,35.48 L1264.09,35.20 L1264.22,34.90 L1264.34,34.60 L1264.39,34.25 L1263.89,33.52 L1263.48,32.72 L1263.67,32.30 L1263.97,31.97 L1264.30,31.67 L1264.72,31.48 L1265.52,31.89 L1266.25,32.39 L1266.60,32.34 L1266.90,32.22 L1267.20,32.09 L1267.48,31.88 L1267.65,31.01 L1267.92,30.15 L1268.35,29.99 L1268.80,29.96 L1269.25,29.99 L1269.68,30.15 L1269.95,31.01 L1270.12,31.88 L1270.40,32.09 L1270.70,32.22 L1271.00,32.34 L1271.35,32.39 L1272.08,31.89 L1272.88,31.48 L1273.30,31.67 L1273.63,31.97 L1273.93,32.30 L1274.12,32.72 L1273.71,33.52 L1273.21,34.25 L1273.26,34.60 L1273.38,34.90 L1273.51,35.20 L1273.72,35.48 L1274.59,35.65 L1275.45,35.92 L1275.61,36.35 Z" fill="none" stroke="#3a3a3a" stroke-width="1.15" stroke-linejoin="round"/><circle cx="1268.8" cy="36.8" r="1.7" fill="none" stroke="#3a3a3a" stroke-width="1"/><path d="M1281,35 h5 l-2.500,2.800 z" fill="#111"/><path d="M1303.500,30.500 v12.600 l-7.600,-6.300 z" fill="none" stroke="#b8b8b8" stroke-width="1"/><path d="M1324.500,30.500 v12.600 l7.600,-6.300 z" fill="none" stroke="#b8b8b8" stroke-width="1"/><path d="M1349.600,39.400 l3.100,-3.400 l3.100,3.400" fill="none" stroke="#2c3048" stroke-width="3.400" stroke-linejoin="round" stroke-linecap="round"/><path d="M1349.600,39.400 l3.100,-3.400 l3.100,3.400" fill="none" stroke="#f0f0f0" stroke-width="1.200" stroke-linejoin="round" stroke-linecap="round"/><path d="M96.800,180.200 v9.400 l5.400,-4.700 z" fill="#111"/><path d="M83,209.6 h12.400000000000002 l4.2,4.2 v16.8 h-16.6 z" fill="#fff" stroke="#767676" stroke-width="1.2" stroke-linejoin="round"/><path d="M95.39999999999999,209.6 v4.2 h4.2 z" fill="#8a8a8a" stroke="#767676" stroke-width="0.72"/><path d="M84.200,209.600 h7.400 v14.600 l-3.700,-3.400 l-3.700,3.400 z" fill="#8e4fa6"/><path d="M82,254.400 h10 v1.600 h-8.400 v12 h-1.600 z M85.400,257.600 h10 v1.600 h-8.400 v12.400 h-1.600 z" fill="#2e6db4"/><rect x="88.600" y="260.800" width="11.800" height="14.200" fill="#2e6db4"/><path d="M86,300.500 h16 l-7.400,6.400 h-16 z" fill="#fff" stroke="#2e6db4" stroke-width="1"/><path d="M86,307.200 h16 l-7.400,6.400 h-16 z" fill="#2e6db4" stroke="#2e6db4" stroke-width="1"/><path d="M80.400,319 l-1.800,1.600 h16 l7.400,-6.400 h-3.400" fill="none" stroke="#2e6db4" stroke-width="1"/><path d="M80,344 h13.800 v10.400 h-10 l-2.600,2.800 v-2.800 h-1.200 z" fill="#ecae52"/><path d="M82.600,347.600 h8.600 M82.600,350.600 h8.600" stroke="#fbe6c4" stroke-width="1"/><path d="M88.200,352.400 h13.800 v10.400 h-1.200 v2.800 l-2.600,-2.800 h-10 z" fill="#6e6e6e"/><path d="M90.800,356 h8.600 M90.800,359 h8.600" stroke="#d8d8d8" stroke-width="1"/><g transform="translate(90.4,399.8) rotate(-40) scale(0.9) translate(2.9,-3.4)"><path d="M-8.400,-1.600 h14 a3.400,3.400 0 0 1 0,6.800 h-13.400 a2.100,2.100 0 0 1 0,-4.200 h11.600 M5.600,-1.600 h0 M-8.400,-1.600 h-1.400 a5,5 0 0 0 0,10 h16" fill="none" stroke="#2e6db4" stroke-width="1.500" stroke-linecap="round"/></g><path d="M85.400,444 v-3.400 a5.600,5.600 0 0 1 11.200,0 v3.400" fill="none" stroke="#ecae52" stroke-width="2.600"/><rect x="82.200" y="443.800" width="17.600" height="12.400" rx="1.200" fill="#ecae52"/><circle cx="91" cy="448.600" r="1.700" fill="#fff"/><path d="M91,449 v4.400" stroke="#fff" stroke-width="1.600"/><g transform="translate(81.600,496) rotate(-45)"><path d="M0,0 l3.600,-1.500 h10 v3 h-10 z" fill="#2e6db4"/><rect x="14.600" y="-1.900" width="8.400" height="3.800" rx="1" fill="#2e6db4"/><rect x="15.800" y="-3.200" width="6.400" height="1.200" fill="#2e6db4"/></g><circle cx="96" cy="494.400" r="3.400" fill="#f5c84a" stroke="#8e4fa6" stroke-width="1.600"/><path d="M93.600,497 l-1.800,4.800 l2.600,-1.200 l1,2 l0.600,-4 l0.600,4 l1,-2 l2.600,1.200 l-1.800,-4.800" fill="#8e4fa6"/></svg>
</body></html>
